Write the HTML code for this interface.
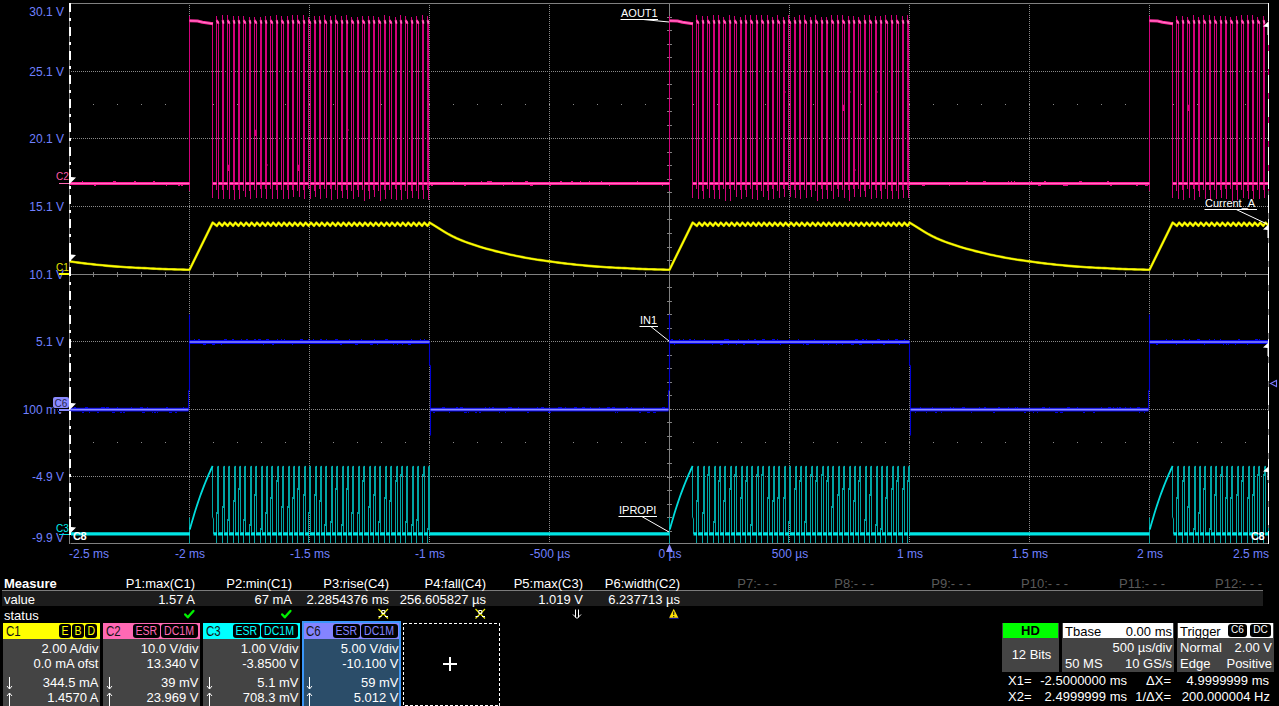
<!DOCTYPE html><html><head><meta charset="utf-8"><title>Oscilloscope</title><style>
html,body{margin:0;padding:0;background:#000;}
body{width:1279px;height:706px;overflow:hidden;position:relative;font-family:"Liberation Sans",Arial,sans-serif;color:#fff;}
.dot{stroke:#8a8a8a;stroke-width:1;stroke-dasharray:1 1;}
.ax{stroke:#808080;stroke-width:1;}
.gl{font-family:"Liberation Sans",Arial,sans-serif;font-size:11px;fill:#fff;}
.yl{position:absolute;right:1215px;font-size:12px;line-height:14px;color:#7080ff;white-space:nowrap;}
.tl{position:absolute;top:547px;font-size:12px;line-height:14px;color:#7080ff;white-space:nowrap;width:80px;text-align:center;}
.cm{position:absolute;font-size:10px;line-height:10px;white-space:nowrap;}
.t13{font-size:13px;line-height:15px;white-space:nowrap;position:absolute;}
.mh{position:absolute;top:576px;width:96px;text-align:right;font-size:13px;line-height:15px;white-space:nowrap;}
.mv{position:absolute;top:592px;width:96px;text-align:right;font-size:13px;line-height:15px;white-space:nowrap;}
.off{color:#5a5a5a;}
.cb{position:absolute;top:623px;width:97px;height:83px;background:#444;}
.cb .hd{position:absolute;left:0;top:0;width:97px;height:16px;}
.cb .nm{position:absolute;left:3px;top:0;font-size:14px;line-height:17px;color:#141414;transform:scaleX(.82);transform-origin:0 0;}
.bd{position:absolute;top:1px;height:14px;background:#000;border-radius:3px;font-size:12px;line-height:14px;text-align:center;}
.cb .r{position:absolute;right:1.5px;font-size:13px;line-height:15px;white-space:nowrap;color:#fff;}
.cb .a{position:absolute;left:3px;font-size:13px;line-height:15px;color:#fff;}
</style></head><body><svg width="1279" height="560" viewBox="0 0 1279 560" style="position:absolute;left:0;top:0"><defs><clipPath id="gc"><rect x="69.5" y="3.5" width="1199.5" height="540.5"/></clipPath></defs><g shape-rendering="crispEdges"><line class="dot" x1="189.5" y1="4.5" x2="189.5" y2="543.5"/><line class="dot" x1="309.5" y1="4.5" x2="309.5" y2="543.5"/><line class="dot" x1="429.5" y1="4.5" x2="429.5" y2="543.5"/><line class="dot" x1="549.5" y1="4.5" x2="549.5" y2="543.5"/><line class="dot" x1="789.5" y1="4.5" x2="789.5" y2="543.5"/><line class="dot" x1="909.5" y1="4.5" x2="909.5" y2="543.5"/><line class="dot" x1="1029.5" y1="4.5" x2="1029.5" y2="543.5"/><line class="dot" x1="1149.5" y1="4.5" x2="1149.5" y2="543.5"/><line class="dot" x1="71" y1="71.5" x2="1268.5" y2="71.5"/><line class="dot" x1="71" y1="138.5" x2="1268.5" y2="138.5"/><line class="dot" x1="71" y1="206.5" x2="1268.5" y2="206.5"/><line class="dot" x1="71" y1="341.5" x2="1268.5" y2="341.5"/><line class="dot" x1="71" y1="409.5" x2="1268.5" y2="409.5"/><line class="dot" x1="71" y1="476.5" x2="1268.5" y2="476.5"/><g fill="#8a8a8a"><rect x="93" y="104" width="1" height="1"/><rect x="117" y="104" width="1" height="1"/><rect x="141" y="104" width="1" height="1"/><rect x="165" y="104" width="1" height="1"/><rect x="189" y="104" width="1" height="1"/><rect x="213" y="104" width="1" height="1"/><rect x="237" y="104" width="1" height="1"/><rect x="261" y="104" width="1" height="1"/><rect x="285" y="104" width="1" height="1"/><rect x="309" y="104" width="1" height="1"/><rect x="333" y="104" width="1" height="1"/><rect x="357" y="104" width="1" height="1"/><rect x="381" y="104" width="1" height="1"/><rect x="405" y="104" width="1" height="1"/><rect x="429" y="104" width="1" height="1"/><rect x="453" y="104" width="1" height="1"/><rect x="477" y="104" width="1" height="1"/><rect x="501" y="104" width="1" height="1"/><rect x="525" y="104" width="1" height="1"/><rect x="549" y="104" width="1" height="1"/><rect x="573" y="104" width="1" height="1"/><rect x="597" y="104" width="1" height="1"/><rect x="621" y="104" width="1" height="1"/><rect x="645" y="104" width="1" height="1"/><rect x="669" y="104" width="1" height="1"/><rect x="693" y="104" width="1" height="1"/><rect x="717" y="104" width="1" height="1"/><rect x="741" y="104" width="1" height="1"/><rect x="765" y="104" width="1" height="1"/><rect x="789" y="104" width="1" height="1"/><rect x="813" y="104" width="1" height="1"/><rect x="837" y="104" width="1" height="1"/><rect x="861" y="104" width="1" height="1"/><rect x="885" y="104" width="1" height="1"/><rect x="909" y="104" width="1" height="1"/><rect x="933" y="104" width="1" height="1"/><rect x="957" y="104" width="1" height="1"/><rect x="981" y="104" width="1" height="1"/><rect x="1005" y="104" width="1" height="1"/><rect x="1029" y="104" width="1" height="1"/><rect x="1053" y="104" width="1" height="1"/><rect x="1077" y="104" width="1" height="1"/><rect x="1101" y="104" width="1" height="1"/><rect x="1125" y="104" width="1" height="1"/><rect x="1149" y="104" width="1" height="1"/><rect x="1173" y="104" width="1" height="1"/><rect x="1197" y="104" width="1" height="1"/><rect x="1221" y="104" width="1" height="1"/><rect x="1245" y="104" width="1" height="1"/></g><g fill="#8a8a8a"><rect x="93" y="442" width="1" height="1"/><rect x="117" y="442" width="1" height="1"/><rect x="141" y="442" width="1" height="1"/><rect x="165" y="442" width="1" height="1"/><rect x="189" y="442" width="1" height="1"/><rect x="213" y="442" width="1" height="1"/><rect x="237" y="442" width="1" height="1"/><rect x="261" y="442" width="1" height="1"/><rect x="285" y="442" width="1" height="1"/><rect x="309" y="442" width="1" height="1"/><rect x="333" y="442" width="1" height="1"/><rect x="357" y="442" width="1" height="1"/><rect x="381" y="442" width="1" height="1"/><rect x="405" y="442" width="1" height="1"/><rect x="429" y="442" width="1" height="1"/><rect x="453" y="442" width="1" height="1"/><rect x="477" y="442" width="1" height="1"/><rect x="501" y="442" width="1" height="1"/><rect x="525" y="442" width="1" height="1"/><rect x="549" y="442" width="1" height="1"/><rect x="573" y="442" width="1" height="1"/><rect x="597" y="442" width="1" height="1"/><rect x="621" y="442" width="1" height="1"/><rect x="645" y="442" width="1" height="1"/><rect x="669" y="442" width="1" height="1"/><rect x="693" y="442" width="1" height="1"/><rect x="717" y="442" width="1" height="1"/><rect x="741" y="442" width="1" height="1"/><rect x="765" y="442" width="1" height="1"/><rect x="789" y="442" width="1" height="1"/><rect x="813" y="442" width="1" height="1"/><rect x="837" y="442" width="1" height="1"/><rect x="861" y="442" width="1" height="1"/><rect x="885" y="442" width="1" height="1"/><rect x="909" y="442" width="1" height="1"/><rect x="933" y="442" width="1" height="1"/><rect x="957" y="442" width="1" height="1"/><rect x="981" y="442" width="1" height="1"/><rect x="1005" y="442" width="1" height="1"/><rect x="1029" y="442" width="1" height="1"/><rect x="1053" y="442" width="1" height="1"/><rect x="1077" y="442" width="1" height="1"/><rect x="1101" y="442" width="1" height="1"/><rect x="1125" y="442" width="1" height="1"/><rect x="1149" y="442" width="1" height="1"/><rect x="1173" y="442" width="1" height="1"/><rect x="1197" y="442" width="1" height="1"/><rect x="1221" y="442" width="1" height="1"/><rect x="1245" y="442" width="1" height="1"/></g><line class="ax" x1="669.5" y1="3.5" x2="669.5" y2="543.5"/><line class="ax" x1="69.5" y1="274.5" x2="1268.5" y2="274.5"/><path class="ax" d="M93.5 272V277M117.5 272V277M141.5 272V277M165.5 272V277M189.5 272V277M213.5 272V277M237.5 272V277M261.5 272V277M285.5 272V277M309.5 272V277M333.5 272V277M357.5 272V277M381.5 272V277M405.5 272V277M429.5 272V277M453.5 272V277M477.5 272V277M501.5 272V277M525.5 272V277M549.5 272V277M573.5 272V277M597.5 272V277M621.5 272V277M645.5 272V277M669.5 272V277M693.5 272V277M717.5 272V277M741.5 272V277M765.5 272V277M789.5 272V277M813.5 272V277M837.5 272V277M861.5 272V277M885.5 272V277M909.5 272V277M933.5 272V277M957.5 272V277M981.5 272V277M1005.5 272V277M1029.5 272V277M1053.5 272V277M1077.5 272V277M1101.5 272V277M1125.5 272V277M1149.5 272V277M1173.5 272V277M1197.5 272V277M1221.5 272V277M1245.5 272V277M667 17.5H672M667 30.5H672M667 44.5H672M667 57.5H672M667 71.5H672M667 84.5H672M667 98.5H672M667 111.5H672M667 125.5H672M667 138.5H672M667 152.5H672M667 165.5H672M667 179.5H672M667 192.5H672M667 206.5H672M667 219.5H672M667 233.5H672M667 247.5H672M667 260.5H672M667 274.5H672M667 287.5H672M667 301.5H672M667 314.5H672M667 328.5H672M667 341.5H672M667 355.5H672M667 368.5H672M667 382.5H672M667 395.5H672M667 409.5H672M667 422.5H672M667 436.5H672M667 449.5H672M667 463.5H672M667 477.5H672M667 490.5H672M667 504.5H672M667 517.5H672M667 531.5H672"/><rect class="ax" fill="none" x="69.5" y="3.5" width="1199" height="540"/></g><g clip-path="url(#gc)" fill="none" stroke-linejoin="round"><path stroke="#d2007a" stroke-width="1" d="M-290.5 191L-290.5 16M-267.5 22L-267.5 198M-263.5 190L-263.5 16M-261.5 21L-261.5 198M-257.5 190L-257.5 15M-256.5 21L-256.5 197M-252.5 191L-252.5 15M-250.5 21L-250.5 197M-246.5 190L-246.5 15M-245.5 21L-245.5 199M-241.5 189L-241.5 15M-240.5 21L-240.5 198M-236.5 190L-236.5 15M-234.5 21L-234.5 199M-230.5 189L-230.5 17M-229.5 21L-229.5 199M-225.5 190L-225.5 17M-223.5 21L-223.5 199M-219.5 190L-219.5 17M-218.5 21L-218.5 197M-214.5 189L-214.5 17M-213.5 21L-213.5 199M-209.5 190L-209.5 15M-207.5 21L-207.5 197M-203.5 191L-203.5 15M-202.5 21L-202.5 198M-198.5 190L-198.5 15M-196.5 21L-196.5 197M-192.5 190L-192.5 16M-191.5 21L-191.5 199M-187.5 190L-187.5 17M-186.5 21L-186.5 200M-182.5 190L-182.5 15M-180.5 21L-180.5 197M-176.5 190L-176.5 15M-175.5 21L-175.5 198M-171.5 189L-171.5 17M-169.5 21L-169.5 200M-165.5 189L-165.5 16M-164.5 21L-164.5 200M-160.5 190L-160.5 16M-159.5 21L-159.5 199M-155.5 190L-155.5 15M-153.5 21L-153.5 197M-149.5 189L-149.5 16M-148.5 21L-148.5 200M-144.5 191L-144.5 16M-142.5 21L-142.5 197M-138.5 190L-138.5 15M-137.5 21L-137.5 197M-133.5 190L-133.5 16M-132.5 21L-132.5 200M-128.5 189L-128.5 15M-126.5 21L-126.5 198M-122.5 190L-122.5 15M-121.5 21L-121.5 197M-117.5 191L-117.5 17M-115.5 21L-115.5 200M-111.5 189L-111.5 16M-110.5 21L-110.5 197M-106.5 190L-106.5 16M-105.5 21L-105.5 199M-101.5 189L-101.5 16M-99.5 21L-99.5 201M-95.5 190L-95.5 15M-94.5 21L-94.5 201M-90.5 189L-90.5 16M-88.5 21L-88.5 200M-84.5 191L-84.5 16M-83.5 21L-83.5 199M-79.5 191L-79.5 16M-78.5 21L-78.5 199M-74.5 190L-74.5 17M-72.5 21L-72.5 198M-68.5 190L-68.5 15M-67.5 21L-67.5 200M-63.5 190L-63.5 15M-61.5 21L-61.5 198M-57.5 189L-57.5 16M-56.5 21L-56.5 199M-52.5 189L-52.5 15M-51.5 21L-51.5 198M-62.5 111L-62.5 105L-61 105M-208.5 136L-208.5 130L-207 130M-105.5 136L-105.5 130L-104 130M-62.5 111L-62.5 105L-61 105M-110.5 111L-110.5 105L-109 105M189.5 191L189.5 16M212.5 22L212.5 198M216.5 190L216.5 16M218.5 21L218.5 199M222.5 190L222.5 15M223.5 21L223.5 199M227.5 190L227.5 15M229.5 21L229.5 199M233.5 190L233.5 16M234.5 21L234.5 200M238.5 190L238.5 16M239.5 21L239.5 199M243.5 191L243.5 16M245.5 21L245.5 197M249.5 191L249.5 17M250.5 21L250.5 199M254.5 190L254.5 17M256.5 21L256.5 198M260.5 189L260.5 17M261.5 21L261.5 198M265.5 189L265.5 16M266.5 21L266.5 199M270.5 189L270.5 16M272.5 21L272.5 199M276.5 190L276.5 15M277.5 21L277.5 199M281.5 190L281.5 16M283.5 21L283.5 199M287.5 190L287.5 16M288.5 21L288.5 199M292.5 190L292.5 15M293.5 21L293.5 197M297.5 191L297.5 15M299.5 21L299.5 197M303.5 190L303.5 15M304.5 21L304.5 199M308.5 189L308.5 17M310.5 21L310.5 199M314.5 191L314.5 16M315.5 21L315.5 197M319.5 189L319.5 16M320.5 21L320.5 199M324.5 189L324.5 15M326.5 21L326.5 198M330.5 189L330.5 16M331.5 21L331.5 200M335.5 190L335.5 15M337.5 21L337.5 199M341.5 191L341.5 16M342.5 21L342.5 198M346.5 190L346.5 15M347.5 21L347.5 199M351.5 191L351.5 17M353.5 21L353.5 199M357.5 190L357.5 17M358.5 21L358.5 197M362.5 190L362.5 16M364.5 21L364.5 201M368.5 191L368.5 16M369.5 21L369.5 199M373.5 190L373.5 16M374.5 21L374.5 197M378.5 191L378.5 17M380.5 21L380.5 201M384.5 190L384.5 15M385.5 21L385.5 199M389.5 190L389.5 16M391.5 21L391.5 199M395.5 189L395.5 17M396.5 21L396.5 200M400.5 190L400.5 15M401.5 21L401.5 200M405.5 191L405.5 16M407.5 21L407.5 199M411.5 191L411.5 17M412.5 21L412.5 198M416.5 191L416.5 16M418.5 21L418.5 199M422.5 190L422.5 15M423.5 21L423.5 199M427.5 190L427.5 16M428.5 21L428.5 200M298.5 171L298.5 165L300 165M228.5 171L228.5 165L230 165M347.5 136L347.5 130L349 130M255.5 136L255.5 130L257 130M266.5 171L266.5 165L268 165M669.5 191L669.5 16M692.5 22L692.5 198M696.5 189L696.5 15M698.5 21L698.5 199M702.5 191L702.5 16M703.5 21L703.5 199M707.5 189L707.5 16M709.5 21L709.5 198M713.5 190L713.5 15M714.5 21L714.5 199M718.5 190L718.5 15M719.5 21L719.5 199M723.5 189L723.5 17M725.5 21L725.5 201M729.5 189L729.5 15M730.5 21L730.5 201M734.5 190L734.5 16M736.5 21L736.5 197M740.5 190L740.5 17M741.5 21L741.5 199M745.5 190L745.5 15M746.5 21L746.5 197M750.5 189L750.5 15M752.5 21L752.5 199M756.5 190L756.5 15M757.5 21L757.5 200M761.5 191L761.5 15M763.5 21L763.5 197M767.5 191L767.5 15M768.5 21L768.5 200M772.5 189L772.5 17M773.5 21L773.5 199M777.5 191L777.5 15M779.5 21L779.5 198M783.5 189L783.5 17M784.5 21L784.5 197M788.5 190L788.5 15M790.5 21L790.5 197M794.5 190L794.5 17M795.5 21L795.5 198M799.5 190L799.5 15M800.5 21L800.5 199M804.5 190L804.5 15M806.5 21L806.5 198M810.5 190L810.5 17M811.5 21L811.5 197M815.5 191L815.5 15M817.5 21L817.5 201M821.5 189L821.5 17M822.5 21L822.5 199M826.5 190L826.5 17M827.5 21L827.5 199M831.5 191L831.5 15M833.5 21L833.5 199M837.5 189L837.5 15M838.5 21L838.5 197M842.5 190L842.5 15M844.5 21L844.5 198M848.5 190L848.5 16M849.5 21L849.5 201M853.5 189L853.5 16M854.5 21L854.5 197M858.5 189L858.5 17M860.5 21L860.5 197M864.5 191L864.5 15M865.5 21L865.5 197M869.5 189L869.5 15M871.5 21L871.5 199M875.5 190L875.5 16M876.5 21L876.5 198M880.5 191L880.5 16M881.5 21L881.5 199M885.5 189L885.5 15M887.5 21L887.5 199M891.5 191L891.5 15M892.5 21L892.5 199M896.5 191L896.5 15M898.5 21L898.5 199M902.5 190L902.5 16M903.5 21L903.5 198M907.5 190L907.5 15M908.5 21L908.5 198M876.5 98L876.5 92L878 92M784.5 98L784.5 92L786 92M854.5 176L854.5 170L856 170M843.5 111L843.5 105L845 105M849.5 98L849.5 92L851 92M1149.5 191L1149.5 16M1172.5 22L1172.5 198M1176.5 191L1176.5 16M1178.5 21L1178.5 199M1182.5 190L1182.5 16M1183.5 21L1183.5 200M1187.5 189L1187.5 17M1189.5 21L1189.5 198M1193.5 189L1193.5 15M1194.5 21L1194.5 200M1198.5 191L1198.5 17M1199.5 21L1199.5 197M1203.5 190L1203.5 15M1205.5 21L1205.5 199M1209.5 190L1209.5 15M1210.5 21L1210.5 200M1214.5 190L1214.5 16M1216.5 21L1216.5 199M1220.5 190L1220.5 16M1221.5 21L1221.5 198M1225.5 189L1225.5 16M1226.5 21L1226.5 199M1230.5 189L1230.5 17M1232.5 21L1232.5 201M1236.5 190L1236.5 16M1237.5 21L1237.5 200M1241.5 190L1241.5 15M1243.5 21L1243.5 198M1247.5 191L1247.5 15M1248.5 21L1248.5 199M1252.5 191L1252.5 15M1253.5 21L1253.5 199M1257.5 190L1257.5 17M1259.5 21L1259.5 199M1263.5 190L1263.5 16M1264.5 21L1264.5 198M1268.5 191L1268.5 15M1270.5 21L1270.5 197M1274.5 191L1274.5 16M1275.5 21L1275.5 197M1279.5 190L1279.5 15M1280.5 21L1280.5 197M1284.5 190L1284.5 15M1286.5 21L1286.5 199M1290.5 190L1290.5 16M1291.5 21L1291.5 199M1295.5 191L1295.5 15M1297.5 21L1297.5 201M1301.5 190L1301.5 16M1302.5 21L1302.5 200M1306.5 190L1306.5 16M1307.5 21L1307.5 200M1311.5 190L1311.5 16M1313.5 21L1313.5 200M1317.5 190L1317.5 15M1318.5 21L1318.5 199M1322.5 190L1322.5 17M1324.5 21L1324.5 197M1328.5 190L1328.5 16M1329.5 21L1329.5 198M1333.5 189L1333.5 15M1334.5 21L1334.5 201M1338.5 189L1338.5 16M1340.5 21L1340.5 197M1344.5 190L1344.5 16M1345.5 21L1345.5 199M1349.5 190L1349.5 16M1351.5 21L1351.5 201M1355.5 189L1355.5 15M1356.5 21L1356.5 200M1360.5 190L1360.5 15M1361.5 21L1361.5 199M1365.5 191L1365.5 15M1367.5 21L1367.5 198M1371.5 190L1371.5 15M1372.5 21L1372.5 199M1376.5 191L1376.5 16M1378.5 21L1378.5 197M1382.5 191L1382.5 15M1383.5 21L1383.5 199M1387.5 190L1387.5 16M1388.5 21L1388.5 199M1280.5 171L1280.5 165L1282 165M1188.5 111L1188.5 105L1190 105M1312.5 111L1312.5 105L1314 105M1377.5 111L1377.5 105L1379 105M1269.5 56L1269.5 50L1271 50"/><path stroke="#ff1c98" stroke-width="3" d="M-530.5 183.5H-290.5M-267 183.5H-263.5M-261.5 183.5H-257.5M-256.5 183.5H-252.5M-250.5 183.5H-246.5M-245.5 183.5H-241.5M-240.5 183.5H-236.5M-234.5 183.5H-230.5M-229.5 183.5H-225.5M-223.5 183.5H-219.5M-218.5 183.5H-214.5M-213.5 183.5H-209.5M-207.5 183.5H-203.5M-202.5 183.5H-198.5M-196.5 183.5H-192.5M-191.5 183.5H-187.5M-186.5 183.5H-182.5M-180.5 183.5H-176.5M-175.5 183.5H-171.5M-169.5 183.5H-165.5M-164.5 183.5H-160.5M-159.5 183.5H-155.5M-153.5 183.5H-149.5M-148.5 183.5H-144.5M-142.5 183.5H-138.5M-137.5 183.5H-133.5M-132.5 183.5H-128.5M-126.5 183.5H-122.5M-121.5 183.5H-117.5M-115.5 183.5H-111.5M-110.5 183.5H-106.5M-105.5 183.5H-101.5M-99.5 183.5H-95.5M-94.5 183.5H-90.5M-88.5 183.5H-84.5M-83.5 183.5H-79.5M-78.5 183.5H-74.5M-72.5 183.5H-68.5M-67.5 183.5H-63.5M-61.5 183.5H-57.5M-56.5 183.5H-52.5M-51.5 183.5H-49.5M-50.5 183.5H189.5M213 183.5H216.5M218.5 183.5H222.5M223.5 183.5H227.5M229.5 183.5H233.5M234.5 183.5H238.5M239.5 183.5H243.5M245.5 183.5H249.5M250.5 183.5H254.5M256.5 183.5H260.5M261.5 183.5H265.5M266.5 183.5H270.5M272.5 183.5H276.5M277.5 183.5H281.5M283.5 183.5H287.5M288.5 183.5H292.5M293.5 183.5H297.5M299.5 183.5H303.5M304.5 183.5H308.5M310.5 183.5H314.5M315.5 183.5H319.5M320.5 183.5H324.5M326.5 183.5H330.5M331.5 183.5H335.5M337.5 183.5H341.5M342.5 183.5H346.5M347.5 183.5H351.5M353.5 183.5H357.5M358.5 183.5H362.5M364.5 183.5H368.5M369.5 183.5H373.5M374.5 183.5H378.5M380.5 183.5H384.5M385.5 183.5H389.5M391.5 183.5H395.5M396.5 183.5H400.5M401.5 183.5H405.5M407.5 183.5H411.5M412.5 183.5H416.5M418.5 183.5H422.5M423.5 183.5H427.5M428.5 183.5H430.5M429.5 183.5H669.5M693 183.5H696.5M698.5 183.5H702.5M703.5 183.5H707.5M709.5 183.5H713.5M714.5 183.5H718.5M719.5 183.5H723.5M725.5 183.5H729.5M730.5 183.5H734.5M736.5 183.5H740.5M741.5 183.5H745.5M746.5 183.5H750.5M752.5 183.5H756.5M757.5 183.5H761.5M763.5 183.5H767.5M768.5 183.5H772.5M773.5 183.5H777.5M779.5 183.5H783.5M784.5 183.5H788.5M790.5 183.5H794.5M795.5 183.5H799.5M800.5 183.5H804.5M806.5 183.5H810.5M811.5 183.5H815.5M817.5 183.5H821.5M822.5 183.5H826.5M827.5 183.5H831.5M833.5 183.5H837.5M838.5 183.5H842.5M844.5 183.5H848.5M849.5 183.5H853.5M854.5 183.5H858.5M860.5 183.5H864.5M865.5 183.5H869.5M871.5 183.5H875.5M876.5 183.5H880.5M881.5 183.5H885.5M887.5 183.5H891.5M892.5 183.5H896.5M898.5 183.5H902.5M903.5 183.5H907.5M908.5 183.5H910.5M909.5 183.5H1149.5M1173 183.5H1176.5M1178.5 183.5H1182.5M1183.5 183.5H1187.5M1189.5 183.5H1193.5M1194.5 183.5H1198.5M1199.5 183.5H1203.5M1205.5 183.5H1209.5M1210.5 183.5H1214.5M1216.5 183.5H1220.5M1221.5 183.5H1225.5M1226.5 183.5H1230.5M1232.5 183.5H1236.5M1237.5 183.5H1241.5M1243.5 183.5H1247.5M1248.5 183.5H1252.5M1253.5 183.5H1257.5M1259.5 183.5H1263.5M1264.5 183.5H1268.5M1270.5 183.5H1274.5M1275.5 183.5H1279.5M1280.5 183.5H1284.5M1286.5 183.5H1290.5M1291.5 183.5H1295.5M1297.5 183.5H1301.5M1302.5 183.5H1306.5M1307.5 183.5H1311.5M1313.5 183.5H1317.5M1318.5 183.5H1322.5M1324.5 183.5H1328.5M1329.5 183.5H1333.5M1334.5 183.5H1338.5M1340.5 183.5H1344.5M1345.5 183.5H1349.5M1351.5 183.5H1355.5M1356.5 183.5H1360.5M1361.5 183.5H1365.5M1367.5 183.5H1371.5M1372.5 183.5H1376.5M1378.5 183.5H1382.5M1383.5 183.5H1387.5M1388.5 183.5H1390.5"/><path stroke="#ff70c0" stroke-width="1" d="M-530.5 183.5H-290.5M-267 183.5H-263.5M-261.5 183.5H-257.5M-256.5 183.5H-252.5M-250.5 183.5H-246.5M-245.5 183.5H-241.5M-240.5 183.5H-236.5M-234.5 183.5H-230.5M-229.5 183.5H-225.5M-223.5 183.5H-219.5M-218.5 183.5H-214.5M-213.5 183.5H-209.5M-207.5 183.5H-203.5M-202.5 183.5H-198.5M-196.5 183.5H-192.5M-191.5 183.5H-187.5M-186.5 183.5H-182.5M-180.5 183.5H-176.5M-175.5 183.5H-171.5M-169.5 183.5H-165.5M-164.5 183.5H-160.5M-159.5 183.5H-155.5M-153.5 183.5H-149.5M-148.5 183.5H-144.5M-142.5 183.5H-138.5M-137.5 183.5H-133.5M-132.5 183.5H-128.5M-126.5 183.5H-122.5M-121.5 183.5H-117.5M-115.5 183.5H-111.5M-110.5 183.5H-106.5M-105.5 183.5H-101.5M-99.5 183.5H-95.5M-94.5 183.5H-90.5M-88.5 183.5H-84.5M-83.5 183.5H-79.5M-78.5 183.5H-74.5M-72.5 183.5H-68.5M-67.5 183.5H-63.5M-61.5 183.5H-57.5M-56.5 183.5H-52.5M-51.5 183.5H-49.5M-50.5 183.5H189.5M213 183.5H216.5M218.5 183.5H222.5M223.5 183.5H227.5M229.5 183.5H233.5M234.5 183.5H238.5M239.5 183.5H243.5M245.5 183.5H249.5M250.5 183.5H254.5M256.5 183.5H260.5M261.5 183.5H265.5M266.5 183.5H270.5M272.5 183.5H276.5M277.5 183.5H281.5M283.5 183.5H287.5M288.5 183.5H292.5M293.5 183.5H297.5M299.5 183.5H303.5M304.5 183.5H308.5M310.5 183.5H314.5M315.5 183.5H319.5M320.5 183.5H324.5M326.5 183.5H330.5M331.5 183.5H335.5M337.5 183.5H341.5M342.5 183.5H346.5M347.5 183.5H351.5M353.5 183.5H357.5M358.5 183.5H362.5M364.5 183.5H368.5M369.5 183.5H373.5M374.5 183.5H378.5M380.5 183.5H384.5M385.5 183.5H389.5M391.5 183.5H395.5M396.5 183.5H400.5M401.5 183.5H405.5M407.5 183.5H411.5M412.5 183.5H416.5M418.5 183.5H422.5M423.5 183.5H427.5M428.5 183.5H430.5M429.5 183.5H669.5M693 183.5H696.5M698.5 183.5H702.5M703.5 183.5H707.5M709.5 183.5H713.5M714.5 183.5H718.5M719.5 183.5H723.5M725.5 183.5H729.5M730.5 183.5H734.5M736.5 183.5H740.5M741.5 183.5H745.5M746.5 183.5H750.5M752.5 183.5H756.5M757.5 183.5H761.5M763.5 183.5H767.5M768.5 183.5H772.5M773.5 183.5H777.5M779.5 183.5H783.5M784.5 183.5H788.5M790.5 183.5H794.5M795.5 183.5H799.5M800.5 183.5H804.5M806.5 183.5H810.5M811.5 183.5H815.5M817.5 183.5H821.5M822.5 183.5H826.5M827.5 183.5H831.5M833.5 183.5H837.5M838.5 183.5H842.5M844.5 183.5H848.5M849.5 183.5H853.5M854.5 183.5H858.5M860.5 183.5H864.5M865.5 183.5H869.5M871.5 183.5H875.5M876.5 183.5H880.5M881.5 183.5H885.5M887.5 183.5H891.5M892.5 183.5H896.5M898.5 183.5H902.5M903.5 183.5H907.5M908.5 183.5H910.5M909.5 183.5H1149.5M1173 183.5H1176.5M1178.5 183.5H1182.5M1183.5 183.5H1187.5M1189.5 183.5H1193.5M1194.5 183.5H1198.5M1199.5 183.5H1203.5M1205.5 183.5H1209.5M1210.5 183.5H1214.5M1216.5 183.5H1220.5M1221.5 183.5H1225.5M1226.5 183.5H1230.5M1232.5 183.5H1236.5M1237.5 183.5H1241.5M1243.5 183.5H1247.5M1248.5 183.5H1252.5M1253.5 183.5H1257.5M1259.5 183.5H1263.5M1264.5 183.5H1268.5M1270.5 183.5H1274.5M1275.5 183.5H1279.5M1280.5 183.5H1284.5M1286.5 183.5H1290.5M1291.5 183.5H1295.5M1297.5 183.5H1301.5M1302.5 183.5H1306.5M1307.5 183.5H1311.5M1313.5 183.5H1317.5M1318.5 183.5H1322.5M1324.5 183.5H1328.5M1329.5 183.5H1333.5M1334.5 183.5H1338.5M1340.5 183.5H1344.5M1345.5 183.5H1349.5M1351.5 183.5H1355.5M1356.5 183.5H1360.5M1361.5 183.5H1365.5M1367.5 183.5H1371.5M1372.5 183.5H1376.5M1378.5 183.5H1382.5M1383.5 183.5H1387.5M1388.5 183.5H1390.5"/><path stroke="#ff35a4" stroke-width="2.2" d="M-263.3 20L-261.6 23.6M-257.3 20L-256.6 23.6M-252.3 20L-250.6 23.6M-246.3 20L-245.6 23.6M-241.3 20L-240.6 23.6M-236.3 20L-234.6 23.6M-230.3 20L-229.6 23.6M-225.3 20L-223.6 23.6M-219.3 20L-218.6 23.6M-214.3 20L-213.6 23.6M-209.3 20L-207.6 23.6M-203.3 20L-202.6 23.6M-198.3 20L-196.6 23.6M-192.3 20L-191.6 23.6M-187.3 20L-186.6 23.6M-182.3 20L-180.6 23.6M-176.3 20L-175.6 23.6M-171.3 20L-169.6 23.6M-165.3 20L-164.6 23.6M-160.3 20L-159.6 23.6M-155.3 20L-153.6 23.6M-149.3 20L-148.6 23.6M-144.3 20L-142.6 23.6M-138.3 20L-137.6 23.6M-133.3 20L-132.6 23.6M-128.3 20L-126.6 23.6M-122.3 20L-121.6 23.6M-117.3 20L-115.6 23.6M-111.3 20L-110.6 23.6M-106.3 20L-105.6 23.6M-101.3 20L-99.6 23.6M-95.3 20L-94.6 23.6M-90.3 20L-88.6 23.6M-84.3 20L-83.6 23.6M-79.3 20L-78.6 23.6M-74.3 20L-72.6 23.6M-68.3 20L-67.6 23.6M-63.3 20L-61.6 23.6M-57.3 20L-56.6 23.6M-52.3 20L-51.6 23.6M216.7 20L218.4 23.6M222.7 20L223.4 23.6M227.7 20L229.4 23.6M233.7 20L234.4 23.6M238.7 20L239.4 23.6M243.7 20L245.4 23.6M249.7 20L250.4 23.6M254.7 20L256.4 23.6M260.7 20L261.4 23.6M265.7 20L266.4 23.6M270.7 20L272.4 23.6M276.7 20L277.4 23.6M281.7 20L283.4 23.6M287.7 20L288.4 23.6M292.7 20L293.4 23.6M297.7 20L299.4 23.6M303.7 20L304.4 23.6M308.7 20L310.4 23.6M314.7 20L315.4 23.6M319.7 20L320.4 23.6M324.7 20L326.4 23.6M330.7 20L331.4 23.6M335.7 20L337.4 23.6M341.7 20L342.4 23.6M346.7 20L347.4 23.6M351.7 20L353.4 23.6M357.7 20L358.4 23.6M362.7 20L364.4 23.6M368.7 20L369.4 23.6M373.7 20L374.4 23.6M378.7 20L380.4 23.6M384.7 20L385.4 23.6M389.7 20L391.4 23.6M395.7 20L396.4 23.6M400.7 20L401.4 23.6M405.7 20L407.4 23.6M411.7 20L412.4 23.6M416.7 20L418.4 23.6M422.7 20L423.4 23.6M427.7 20L428.4 23.6M696.7 20L698.4 23.6M702.7 20L703.4 23.6M707.7 20L709.4 23.6M713.7 20L714.4 23.6M718.7 20L719.4 23.6M723.7 20L725.4 23.6M729.7 20L730.4 23.6M734.7 20L736.4 23.6M740.7 20L741.4 23.6M745.7 20L746.4 23.6M750.7 20L752.4 23.6M756.7 20L757.4 23.6M761.7 20L763.4 23.6M767.7 20L768.4 23.6M772.7 20L773.4 23.6M777.7 20L779.4 23.6M783.7 20L784.4 23.6M788.7 20L790.4 23.6M794.7 20L795.4 23.6M799.7 20L800.4 23.6M804.7 20L806.4 23.6M810.7 20L811.4 23.6M815.7 20L817.4 23.6M821.7 20L822.4 23.6M826.7 20L827.4 23.6M831.7 20L833.4 23.6M837.7 20L838.4 23.6M842.7 20L844.4 23.6M848.7 20L849.4 23.6M853.7 20L854.4 23.6M858.7 20L860.4 23.6M864.7 20L865.4 23.6M869.7 20L871.4 23.6M875.7 20L876.4 23.6M880.7 20L881.4 23.6M885.7 20L887.4 23.6M891.7 20L892.4 23.6M896.7 20L898.4 23.6M902.7 20L903.4 23.6M907.7 20L908.4 23.6M1176.7 20L1178.4 23.6M1182.7 20L1183.4 23.6M1187.7 20L1189.4 23.6M1193.7 20L1194.4 23.6M1198.7 20L1199.4 23.6M1203.7 20L1205.4 23.6M1209.7 20L1210.4 23.6M1214.7 20L1216.4 23.6M1220.7 20L1221.4 23.6M1225.7 20L1226.4 23.6M1230.7 20L1232.4 23.6M1236.7 20L1237.4 23.6M1241.7 20L1243.4 23.6M1247.7 20L1248.4 23.6M1252.7 20L1253.4 23.6M1257.7 20L1259.4 23.6M1263.7 20L1264.4 23.6M1268.7 20L1270.4 23.6M1274.7 20L1275.4 23.6M1279.7 20L1280.4 23.6M1284.7 20L1286.4 23.6M1290.7 20L1291.4 23.6M1295.7 20L1297.4 23.6M1301.7 20L1302.4 23.6M1306.7 20L1307.4 23.6M1311.7 20L1313.4 23.6M1317.7 20L1318.4 23.6M1322.7 20L1324.4 23.6M1328.7 20L1329.4 23.6M1333.7 20L1334.4 23.6M1338.7 20L1340.4 23.6M1344.7 20L1345.4 23.6M1349.7 20L1351.4 23.6M1355.7 20L1356.4 23.6M1360.7 20L1361.4 23.6M1365.7 20L1367.4 23.6M1371.7 20L1372.4 23.6M1376.7 20L1378.4 23.6M1382.7 20L1383.4 23.6M1387.7 20L1388.4 23.6"/><path stroke="#ff8acd" stroke-width="1" stroke-linecap="round" d="M-263 21.5L-261.6 23.1M-257 21.5L-256.6 23.1M-252 21.5L-250.6 23.1M-246 21.5L-245.6 23.1M-241 21.5L-240.6 23.1M-236 21.5L-234.6 23.1M-230 21.5L-229.6 23.1M-225 21.5L-223.6 23.1M-219 21.5L-218.6 23.1M-214 21.5L-213.6 23.1M-209 21.5L-207.6 23.1M-203 21.5L-202.6 23.1M-198 21.5L-196.6 23.1M-192 21.5L-191.6 23.1M-187 21.5L-186.6 23.1M-182 21.5L-180.6 23.1M-176 21.5L-175.6 23.1M-171 21.5L-169.6 23.1M-165 21.5L-164.6 23.1M-160 21.5L-159.6 23.1M-155 21.5L-153.6 23.1M-149 21.5L-148.6 23.1M-144 21.5L-142.6 23.1M-138 21.5L-137.6 23.1M-133 21.5L-132.6 23.1M-128 21.5L-126.6 23.1M-122 21.5L-121.6 23.1M-117 21.5L-115.6 23.1M-111 21.5L-110.6 23.1M-106 21.5L-105.6 23.1M-101 21.5L-99.6 23.1M-95 21.5L-94.6 23.1M-90 21.5L-88.6 23.1M-84 21.5L-83.6 23.1M-79 21.5L-78.6 23.1M-74 21.5L-72.6 23.1M-68 21.5L-67.6 23.1M-63 21.5L-61.6 23.1M-57 21.5L-56.6 23.1M-52 21.5L-51.6 23.1M217 21.5L218.4 23.1M223 21.5L223.4 23.1M228 21.5L229.4 23.1M234 21.5L234.4 23.1M239 21.5L239.4 23.1M244 21.5L245.4 23.1M250 21.5L250.4 23.1M255 21.5L256.4 23.1M261 21.5L261.4 23.1M266 21.5L266.4 23.1M271 21.5L272.4 23.1M277 21.5L277.4 23.1M282 21.5L283.4 23.1M288 21.5L288.4 23.1M293 21.5L293.4 23.1M298 21.5L299.4 23.1M304 21.5L304.4 23.1M309 21.5L310.4 23.1M315 21.5L315.4 23.1M320 21.5L320.4 23.1M325 21.5L326.4 23.1M331 21.5L331.4 23.1M336 21.5L337.4 23.1M342 21.5L342.4 23.1M347 21.5L347.4 23.1M352 21.5L353.4 23.1M358 21.5L358.4 23.1M363 21.5L364.4 23.1M369 21.5L369.4 23.1M374 21.5L374.4 23.1M379 21.5L380.4 23.1M385 21.5L385.4 23.1M390 21.5L391.4 23.1M396 21.5L396.4 23.1M401 21.5L401.4 23.1M406 21.5L407.4 23.1M412 21.5L412.4 23.1M417 21.5L418.4 23.1M423 21.5L423.4 23.1M428 21.5L428.4 23.1M697 21.5L698.4 23.1M703 21.5L703.4 23.1M708 21.5L709.4 23.1M714 21.5L714.4 23.1M719 21.5L719.4 23.1M724 21.5L725.4 23.1M730 21.5L730.4 23.1M735 21.5L736.4 23.1M741 21.5L741.4 23.1M746 21.5L746.4 23.1M751 21.5L752.4 23.1M757 21.5L757.4 23.1M762 21.5L763.4 23.1M768 21.5L768.4 23.1M773 21.5L773.4 23.1M778 21.5L779.4 23.1M784 21.5L784.4 23.1M789 21.5L790.4 23.1M795 21.5L795.4 23.1M800 21.5L800.4 23.1M805 21.5L806.4 23.1M811 21.5L811.4 23.1M816 21.5L817.4 23.1M822 21.5L822.4 23.1M827 21.5L827.4 23.1M832 21.5L833.4 23.1M838 21.5L838.4 23.1M843 21.5L844.4 23.1M849 21.5L849.4 23.1M854 21.5L854.4 23.1M859 21.5L860.4 23.1M865 21.5L865.4 23.1M870 21.5L871.4 23.1M876 21.5L876.4 23.1M881 21.5L881.4 23.1M886 21.5L887.4 23.1M892 21.5L892.4 23.1M897 21.5L898.4 23.1M903 21.5L903.4 23.1M908 21.5L908.4 23.1M1177 21.5L1178.4 23.1M1183 21.5L1183.4 23.1M1188 21.5L1189.4 23.1M1194 21.5L1194.4 23.1M1199 21.5L1199.4 23.1M1204 21.5L1205.4 23.1M1210 21.5L1210.4 23.1M1215 21.5L1216.4 23.1M1221 21.5L1221.4 23.1M1226 21.5L1226.4 23.1M1231 21.5L1232.4 23.1M1237 21.5L1237.4 23.1M1242 21.5L1243.4 23.1M1248 21.5L1248.4 23.1M1253 21.5L1253.4 23.1M1258 21.5L1259.4 23.1M1264 21.5L1264.4 23.1M1269 21.5L1270.4 23.1M1275 21.5L1275.4 23.1M1280 21.5L1280.4 23.1M1285 21.5L1286.4 23.1M1291 21.5L1291.4 23.1M1296 21.5L1297.4 23.1M1302 21.5L1302.4 23.1M1307 21.5L1307.4 23.1M1312 21.5L1313.4 23.1M1318 21.5L1318.4 23.1M1323 21.5L1324.4 23.1M1329 21.5L1329.4 23.1M1334 21.5L1334.4 23.1M1339 21.5L1340.4 23.1M1345 21.5L1345.4 23.1M1350 21.5L1351.4 23.1M1356 21.5L1356.4 23.1M1361 21.5L1361.4 23.1M1366 21.5L1367.4 23.1M1372 21.5L1372.4 23.1M1377 21.5L1378.4 23.1M1383 21.5L1383.4 23.1M1388 21.5L1388.4 23.1"/><path stroke="#ff2da0" stroke-width="3" d="M-290.5 20.8L-282.5 21L-277.5 22.2L-267 23.8M189.5 20.8L197.5 21L202.5 22.2L213 23.8M669.5 20.8L677.5 21L682.5 22.2L693 23.8M1149.5 20.8L1157.5 21L1162.5 22.2L1173 23.8"/><path stroke="#ff80c8" stroke-width="1" d="M-290.5 20.8L-282.5 21L-277.5 22.2L-267 23.8M189.5 20.8L197.5 21L202.5 22.2L213 23.8M669.5 20.8L677.5 21L682.5 22.2L693 23.8M1149.5 20.8L1157.5 21L1162.5 22.2L1173 23.8"/><path stroke="#a0a000" stroke-width="2.6" d="M69.5 261.4L72.5 261.81L75.5 262.22L78.5 262.61L81.5 262.99L84.5 263.36L87.5 263.72L90.5 264.07L93.5 264.4L96.5 264.72L99.5 265.02L102.5 265.32L105.5 265.6L108.5 265.87L111.5 266.13L114.5 266.37L117.5 266.6L120.5 266.82L123.5 267.01L126.5 267.2L129.5 267.37L132.5 267.53L135.5 267.69L138.5 267.84L141.5 268L144.5 268.15L147.5 268.31L150.5 268.45L153.5 268.59L156.5 268.73L159.5 268.86L162.5 268.98L165.5 269.1L168.5 269.21L171.5 269.31L174.5 269.4L177.5 269.49L180.5 269.57L183.5 269.65L186.5 269.72L189.5 269.8L212.7 222.6L216.9 225.9L216.9 225.9L219.1 222.6L222.3 225.9L224.5 222.6L227.7 225.9L229.9 222.6L233.1 225.9L235.3 222.6L238.5 225.9L240.7 222.6L243.9 225.9L246.1 222.6L249.3 225.9L251.5 222.6L254.7 225.9L256.9 222.6L260.1 225.9L262.3 222.6L265.5 225.9L267.7 222.6L270.9 225.9L273.1 222.6L276.3 225.9L278.5 222.6L281.7 225.9L283.9 222.6L287.1 225.9L289.3 222.6L292.5 225.9L294.7 222.6L297.9 225.9L300.1 222.6L303.3 225.9L305.5 222.6L308.7 225.9L310.9 222.6L314.1 225.9L316.3 222.6L319.5 225.9L321.7 222.6L324.9 225.9L327.1 222.6L330.3 225.9L332.5 222.6L335.7 225.9L337.9 222.6L341.1 225.9L343.3 222.6L346.5 225.9L348.7 222.6L351.9 225.9L354.1 222.6L357.3 225.9L359.5 222.6L362.7 225.9L364.9 222.6L368.1 225.9L370.3 222.6L373.5 225.9L375.7 222.6L378.9 225.9L381.1 222.6L384.3 225.9L386.5 222.6L389.7 225.9L391.9 222.6L395.1 225.9L397.3 222.6L400.5 225.9L402.7 222.6L405.9 225.9L408.1 222.6L411.3 225.9L413.5 222.6L416.7 225.9L418.9 222.6L422.1 225.9L424.3 222.6L427.5 225.9L429.7 222.6L429.5 223L429.5 222.6L432.5 224.41L435.5 226.27L438.5 228.14L441.5 230.01L444.5 231.84L447.5 233.6L450.5 235.26L453.5 236.8L456.5 238.21L459.5 239.51L462.5 240.73L465.5 241.88L468.5 242.96L471.5 244L474.5 245.01L477.5 246L480.5 246.96L483.5 247.87L486.5 248.73L489.5 249.56L492.5 250.35L495.5 251.12L498.5 251.86L501.5 252.6L504.5 253.32L507.5 254.01L510.5 254.68L513.5 255.33L516.5 255.96L519.5 256.56L522.5 257.14L525.5 257.7L528.5 258.23L531.5 258.74L534.5 259.22L537.5 259.68L540.5 260.13L543.5 260.56L546.5 260.98L549.5 261.4L552.5 261.81L555.5 262.22L558.5 262.61L561.5 262.99L564.5 263.36L567.5 263.72L570.5 264.07L573.5 264.4L576.5 264.72L579.5 265.02L582.5 265.32L585.5 265.6L588.5 265.87L591.5 266.13L594.5 266.37L597.5 266.6L600.5 266.82L603.5 267.01L606.5 267.2L609.5 267.37L612.5 267.53L615.5 267.69L618.5 267.84L621.5 268L624.5 268.15L627.5 268.31L630.5 268.45L633.5 268.59L636.5 268.73L639.5 268.86L642.5 268.98L645.5 269.1L648.5 269.21L651.5 269.31L654.5 269.4L657.5 269.49L660.5 269.57L663.5 269.65L666.5 269.72L669.5 269.8L692.7 222.6L696.9 225.9L696.9 225.9L699.1 222.6L702.3 225.9L704.5 222.6L707.7 225.9L709.9 222.6L713.1 225.9L715.3 222.6L718.5 225.9L720.7 222.6L723.9 225.9L726.1 222.6L729.3 225.9L731.5 222.6L734.7 225.9L736.9 222.6L740.1 225.9L742.3 222.6L745.5 225.9L747.7 222.6L750.9 225.9L753.1 222.6L756.3 225.9L758.5 222.6L761.7 225.9L763.9 222.6L767.1 225.9L769.3 222.6L772.5 225.9L774.7 222.6L777.9 225.9L780.1 222.6L783.3 225.9L785.5 222.6L788.7 225.9L790.9 222.6L794.1 225.9L796.3 222.6L799.5 225.9L801.7 222.6L804.9 225.9L807.1 222.6L810.3 225.9L812.5 222.6L815.7 225.9L817.9 222.6L821.1 225.9L823.3 222.6L826.5 225.9L828.7 222.6L831.9 225.9L834.1 222.6L837.3 225.9L839.5 222.6L842.7 225.9L844.9 222.6L848.1 225.9L850.3 222.6L853.5 225.9L855.7 222.6L858.9 225.9L861.1 222.6L864.3 225.9L866.5 222.6L869.7 225.9L871.9 222.6L875.1 225.9L877.3 222.6L880.5 225.9L882.7 222.6L885.9 225.9L888.1 222.6L891.3 225.9L893.5 222.6L896.7 225.9L898.9 222.6L902.1 225.9L904.3 222.6L907.5 225.9L909.7 222.6L909.5 223L909.5 222.6L912.5 224.41L915.5 226.27L918.5 228.14L921.5 230.01L924.5 231.84L927.5 233.6L930.5 235.26L933.5 236.8L936.5 238.21L939.5 239.51L942.5 240.73L945.5 241.88L948.5 242.96L951.5 244L954.5 245.01L957.5 246L960.5 246.96L963.5 247.87L966.5 248.73L969.5 249.56L972.5 250.35L975.5 251.12L978.5 251.86L981.5 252.6L984.5 253.32L987.5 254.01L990.5 254.68L993.5 255.33L996.5 255.96L999.5 256.56L1002.5 257.14L1005.5 257.7L1008.5 258.23L1011.5 258.74L1014.5 259.22L1017.5 259.68L1020.5 260.13L1023.5 260.56L1026.5 260.98L1029.5 261.4L1032.5 261.81L1035.5 262.22L1038.5 262.61L1041.5 262.99L1044.5 263.36L1047.5 263.72L1050.5 264.07L1053.5 264.4L1056.5 264.72L1059.5 265.02L1062.5 265.32L1065.5 265.6L1068.5 265.87L1071.5 266.13L1074.5 266.37L1077.5 266.6L1080.5 266.82L1083.5 267.01L1086.5 267.2L1089.5 267.37L1092.5 267.53L1095.5 267.69L1098.5 267.84L1101.5 268L1104.5 268.15L1107.5 268.31L1110.5 268.45L1113.5 268.59L1116.5 268.73L1119.5 268.86L1122.5 268.98L1125.5 269.1L1128.5 269.21L1131.5 269.31L1134.5 269.4L1137.5 269.49L1140.5 269.57L1143.5 269.65L1146.5 269.72L1149.5 269.8L1172.7 222.6L1176.9 225.9L1176.9 225.9L1179.1 222.6L1182.3 225.9L1184.5 222.6L1187.7 225.9L1189.9 222.6L1193.1 225.9L1195.3 222.6L1198.5 225.9L1200.7 222.6L1203.9 225.9L1206.1 222.6L1209.3 225.9L1211.5 222.6L1214.7 225.9L1216.9 222.6L1220.1 225.9L1222.3 222.6L1225.5 225.9L1227.7 222.6L1230.9 225.9L1233.1 222.6L1236.3 225.9L1238.5 222.6L1241.7 225.9L1243.9 222.6L1247.1 225.9L1249.3 222.6L1252.5 225.9L1254.7 222.6L1257.9 225.9L1260.1 222.6L1263.3 225.9L1265.5 222.6L1268.7 225.9L1270.9 222.6L1274.1 225.9L1276.3 222.6L1279.5 225.9L1281.7 222.6L1284.9 225.9L1287.1 222.6L1290.3 225.9L1292.5 222.6L1295.7 225.9L1297.9 222.6L1301.1 225.9L1303.3 222.6L1306.5 225.9L1308.7 222.6L1311.9 225.9L1314.1 222.6L1317.3 225.9L1319.5 222.6L1322.7 225.9L1324.9 222.6L1328.1 225.9L1330.3 222.6L1333.5 225.9L1335.7 222.6L1338.9 225.9L1341.1 222.6L1344.3 225.9L1346.5 222.6L1349.7 225.9L1351.9 222.6L1355.1 225.9L1357.3 222.6L1360.5 225.9L1362.7 222.6L1365.9 225.9L1368.1 222.6L1371.3 225.9L1373.5 222.6L1376.7 225.9L1378.9 222.6L1382.1 225.9L1384.3 222.6L1387.5 225.9L1389.7 222.6L1389.5 223"/><path stroke="#ffff00" stroke-width="1.6" d="M69.5 261.4L72.5 261.81L75.5 262.22L78.5 262.61L81.5 262.99L84.5 263.36L87.5 263.72L90.5 264.07L93.5 264.4L96.5 264.72L99.5 265.02L102.5 265.32L105.5 265.6L108.5 265.87L111.5 266.13L114.5 266.37L117.5 266.6L120.5 266.82L123.5 267.01L126.5 267.2L129.5 267.37L132.5 267.53L135.5 267.69L138.5 267.84L141.5 268L144.5 268.15L147.5 268.31L150.5 268.45L153.5 268.59L156.5 268.73L159.5 268.86L162.5 268.98L165.5 269.1L168.5 269.21L171.5 269.31L174.5 269.4L177.5 269.49L180.5 269.57L183.5 269.65L186.5 269.72L189.5 269.8L212.7 222.6L216.9 225.9L216.9 225.9L219.1 222.6L222.3 225.9L224.5 222.6L227.7 225.9L229.9 222.6L233.1 225.9L235.3 222.6L238.5 225.9L240.7 222.6L243.9 225.9L246.1 222.6L249.3 225.9L251.5 222.6L254.7 225.9L256.9 222.6L260.1 225.9L262.3 222.6L265.5 225.9L267.7 222.6L270.9 225.9L273.1 222.6L276.3 225.9L278.5 222.6L281.7 225.9L283.9 222.6L287.1 225.9L289.3 222.6L292.5 225.9L294.7 222.6L297.9 225.9L300.1 222.6L303.3 225.9L305.5 222.6L308.7 225.9L310.9 222.6L314.1 225.9L316.3 222.6L319.5 225.9L321.7 222.6L324.9 225.9L327.1 222.6L330.3 225.9L332.5 222.6L335.7 225.9L337.9 222.6L341.1 225.9L343.3 222.6L346.5 225.9L348.7 222.6L351.9 225.9L354.1 222.6L357.3 225.9L359.5 222.6L362.7 225.9L364.9 222.6L368.1 225.9L370.3 222.6L373.5 225.9L375.7 222.6L378.9 225.9L381.1 222.6L384.3 225.9L386.5 222.6L389.7 225.9L391.9 222.6L395.1 225.9L397.3 222.6L400.5 225.9L402.7 222.6L405.9 225.9L408.1 222.6L411.3 225.9L413.5 222.6L416.7 225.9L418.9 222.6L422.1 225.9L424.3 222.6L427.5 225.9L429.7 222.6L429.5 223L429.5 222.6L432.5 224.41L435.5 226.27L438.5 228.14L441.5 230.01L444.5 231.84L447.5 233.6L450.5 235.26L453.5 236.8L456.5 238.21L459.5 239.51L462.5 240.73L465.5 241.88L468.5 242.96L471.5 244L474.5 245.01L477.5 246L480.5 246.96L483.5 247.87L486.5 248.73L489.5 249.56L492.5 250.35L495.5 251.12L498.5 251.86L501.5 252.6L504.5 253.32L507.5 254.01L510.5 254.68L513.5 255.33L516.5 255.96L519.5 256.56L522.5 257.14L525.5 257.7L528.5 258.23L531.5 258.74L534.5 259.22L537.5 259.68L540.5 260.13L543.5 260.56L546.5 260.98L549.5 261.4L552.5 261.81L555.5 262.22L558.5 262.61L561.5 262.99L564.5 263.36L567.5 263.72L570.5 264.07L573.5 264.4L576.5 264.72L579.5 265.02L582.5 265.32L585.5 265.6L588.5 265.87L591.5 266.13L594.5 266.37L597.5 266.6L600.5 266.82L603.5 267.01L606.5 267.2L609.5 267.37L612.5 267.53L615.5 267.69L618.5 267.84L621.5 268L624.5 268.15L627.5 268.31L630.5 268.45L633.5 268.59L636.5 268.73L639.5 268.86L642.5 268.98L645.5 269.1L648.5 269.21L651.5 269.31L654.5 269.4L657.5 269.49L660.5 269.57L663.5 269.65L666.5 269.72L669.5 269.8L692.7 222.6L696.9 225.9L696.9 225.9L699.1 222.6L702.3 225.9L704.5 222.6L707.7 225.9L709.9 222.6L713.1 225.9L715.3 222.6L718.5 225.9L720.7 222.6L723.9 225.9L726.1 222.6L729.3 225.9L731.5 222.6L734.7 225.9L736.9 222.6L740.1 225.9L742.3 222.6L745.5 225.9L747.7 222.6L750.9 225.9L753.1 222.6L756.3 225.9L758.5 222.6L761.7 225.9L763.9 222.6L767.1 225.9L769.3 222.6L772.5 225.9L774.7 222.6L777.9 225.9L780.1 222.6L783.3 225.9L785.5 222.6L788.7 225.9L790.9 222.6L794.1 225.9L796.3 222.6L799.5 225.9L801.7 222.6L804.9 225.9L807.1 222.6L810.3 225.9L812.5 222.6L815.7 225.9L817.9 222.6L821.1 225.9L823.3 222.6L826.5 225.9L828.7 222.6L831.9 225.9L834.1 222.6L837.3 225.9L839.5 222.6L842.7 225.9L844.9 222.6L848.1 225.9L850.3 222.6L853.5 225.9L855.7 222.6L858.9 225.9L861.1 222.6L864.3 225.9L866.5 222.6L869.7 225.9L871.9 222.6L875.1 225.9L877.3 222.6L880.5 225.9L882.7 222.6L885.9 225.9L888.1 222.6L891.3 225.9L893.5 222.6L896.7 225.9L898.9 222.6L902.1 225.9L904.3 222.6L907.5 225.9L909.7 222.6L909.5 223L909.5 222.6L912.5 224.41L915.5 226.27L918.5 228.14L921.5 230.01L924.5 231.84L927.5 233.6L930.5 235.26L933.5 236.8L936.5 238.21L939.5 239.51L942.5 240.73L945.5 241.88L948.5 242.96L951.5 244L954.5 245.01L957.5 246L960.5 246.96L963.5 247.87L966.5 248.73L969.5 249.56L972.5 250.35L975.5 251.12L978.5 251.86L981.5 252.6L984.5 253.32L987.5 254.01L990.5 254.68L993.5 255.33L996.5 255.96L999.5 256.56L1002.5 257.14L1005.5 257.7L1008.5 258.23L1011.5 258.74L1014.5 259.22L1017.5 259.68L1020.5 260.13L1023.5 260.56L1026.5 260.98L1029.5 261.4L1032.5 261.81L1035.5 262.22L1038.5 262.61L1041.5 262.99L1044.5 263.36L1047.5 263.72L1050.5 264.07L1053.5 264.4L1056.5 264.72L1059.5 265.02L1062.5 265.32L1065.5 265.6L1068.5 265.87L1071.5 266.13L1074.5 266.37L1077.5 266.6L1080.5 266.82L1083.5 267.01L1086.5 267.2L1089.5 267.37L1092.5 267.53L1095.5 267.69L1098.5 267.84L1101.5 268L1104.5 268.15L1107.5 268.31L1110.5 268.45L1113.5 268.59L1116.5 268.73L1119.5 268.86L1122.5 268.98L1125.5 269.1L1128.5 269.21L1131.5 269.31L1134.5 269.4L1137.5 269.49L1140.5 269.57L1143.5 269.65L1146.5 269.72L1149.5 269.8L1172.7 222.6L1176.9 225.9L1176.9 225.9L1179.1 222.6L1182.3 225.9L1184.5 222.6L1187.7 225.9L1189.9 222.6L1193.1 225.9L1195.3 222.6L1198.5 225.9L1200.7 222.6L1203.9 225.9L1206.1 222.6L1209.3 225.9L1211.5 222.6L1214.7 225.9L1216.9 222.6L1220.1 225.9L1222.3 222.6L1225.5 225.9L1227.7 222.6L1230.9 225.9L1233.1 222.6L1236.3 225.9L1238.5 222.6L1241.7 225.9L1243.9 222.6L1247.1 225.9L1249.3 222.6L1252.5 225.9L1254.7 222.6L1257.9 225.9L1260.1 222.6L1263.3 225.9L1265.5 222.6L1268.7 225.9L1270.9 222.6L1274.1 225.9L1276.3 222.6L1279.5 225.9L1281.7 222.6L1284.9 225.9L1287.1 222.6L1290.3 225.9L1292.5 222.6L1295.7 225.9L1297.9 222.6L1301.1 225.9L1303.3 222.6L1306.5 225.9L1308.7 222.6L1311.9 225.9L1314.1 222.6L1317.3 225.9L1319.5 222.6L1322.7 225.9L1324.9 222.6L1328.1 225.9L1330.3 222.6L1333.5 225.9L1335.7 222.6L1338.9 225.9L1341.1 222.6L1344.3 225.9L1346.5 222.6L1349.7 225.9L1351.9 222.6L1355.1 225.9L1357.3 222.6L1360.5 225.9L1362.7 222.6L1365.9 225.9L1368.1 222.6L1371.3 225.9L1373.5 222.6L1376.7 225.9L1378.9 222.6L1382.1 225.9L1384.3 222.6L1387.5 225.9L1389.7 222.6L1389.5 223"/><path stroke="#0000d0" stroke-width="1.1" d="M188.5 409.7L188.5 391L189.5 390L189.5 314.5M429.5 342L429.5 365L430.5 366L430.5 435.5M668.5 409.7L668.5 391L669.5 390L669.5 314.5M909.5 342L909.5 365L910.5 366L910.5 435.5M1148.5 409.7L1148.5 391L1149.5 390L1149.5 314.5M1389.5 342L1389.5 365L1390.5 366L1390.5 435.5"/><path stroke="#0000e8" stroke-width="3.8" stroke-linejoin="miter" d="M69.5 409.7H188.5M189.5 342H429.5M430.5 409.7H668.5M669.5 342H909.5M910.5 409.7H1148.5M1149.5 342H1389.5M1390.5 409.7H1628.5"/><path stroke="#8e8eff" stroke-width="1.7" d="M69.5 409.7H188.5M189.5 342H429.5M430.5 409.7H668.5M669.5 342H909.5M910.5 409.7H1148.5M1149.5 342H1389.5M1390.5 409.7H1628.5"/><g fill="#0000e0" stroke="none" shape-rendering="crispEdges"><rect x="74" y="407" width="2" height="1"/><rect x="82" y="412" width="2" height="1"/><rect x="85" y="407" width="3" height="1"/><rect x="89" y="412" width="1" height="1"/><rect x="97" y="412" width="2" height="1"/><rect x="101" y="407" width="3" height="1"/><rect x="104" y="407" width="1" height="1"/><rect x="106" y="407" width="3" height="1"/><rect x="112" y="412" width="3" height="1"/><rect x="117" y="407" width="1" height="1"/><rect x="120" y="412" width="2" height="1"/><rect x="123" y="412" width="2" height="1"/><rect x="131" y="407" width="1" height="1"/><rect x="140" y="407" width="3" height="1"/><rect x="142" y="412" width="3" height="1"/><rect x="147" y="407" width="1" height="1"/><rect x="152" y="412" width="1" height="1"/><rect x="154" y="412" width="2" height="1"/><rect x="157" y="412" width="1" height="1"/><rect x="166" y="407" width="2" height="1"/><rect x="169" y="412" width="3" height="1"/><rect x="175" y="412" width="2" height="1"/><rect x="183" y="407" width="1" height="1"/></g><g fill="#0000e0" stroke="none" shape-rendering="crispEdges"><rect x="194" y="339" width="1" height="1"/><rect x="198" y="339" width="2" height="1"/><rect x="203" y="344" width="3" height="1"/><rect x="212" y="344" width="3" height="1"/><rect x="221" y="344" width="1" height="1"/><rect x="224" y="339" width="3" height="1"/><rect x="232" y="339" width="2" height="1"/><rect x="241" y="339" width="1" height="1"/><rect x="246" y="339" width="2" height="1"/><rect x="254" y="339" width="2" height="1"/><rect x="258" y="339" width="3" height="1"/><rect x="263" y="344" width="1" height="1"/><rect x="266" y="339" width="3" height="1"/><rect x="272" y="344" width="2" height="1"/><rect x="277" y="339" width="1" height="1"/><rect x="281" y="339" width="1" height="1"/><rect x="284" y="339" width="1" height="1"/><rect x="292" y="344" width="1" height="1"/><rect x="300" y="339" width="3" height="1"/><rect x="308" y="339" width="1" height="1"/><rect x="313" y="339" width="1" height="1"/><rect x="320" y="339" width="2" height="1"/><rect x="326" y="339" width="1" height="1"/><rect x="335" y="339" width="3" height="1"/><rect x="340" y="344" width="2" height="1"/><rect x="349" y="339" width="1" height="1"/><rect x="355" y="344" width="3" height="1"/><rect x="361" y="339" width="1" height="1"/><rect x="370" y="344" width="3" height="1"/><rect x="374" y="339" width="1" height="1"/><rect x="377" y="344" width="1" height="1"/><rect x="385" y="339" width="3" height="1"/><rect x="393" y="344" width="1" height="1"/><rect x="397" y="344" width="1" height="1"/><rect x="402" y="344" width="1" height="1"/><rect x="408" y="344" width="3" height="1"/><rect x="411" y="339" width="1" height="1"/><rect x="420" y="339" width="1" height="1"/><rect x="424" y="339" width="1" height="1"/></g><g fill="#0000e0" stroke="none" shape-rendering="crispEdges"><rect x="433" y="412" width="2" height="1"/><rect x="442" y="407" width="3" height="1"/><rect x="449" y="412" width="1" height="1"/><rect x="456" y="407" width="2" height="1"/><rect x="460" y="407" width="3" height="1"/><rect x="464" y="412" width="3" height="1"/><rect x="468" y="412" width="1" height="1"/><rect x="475" y="412" width="2" height="1"/><rect x="479" y="412" width="2" height="1"/><rect x="485" y="407" width="1" height="1"/><rect x="489" y="407" width="1" height="1"/><rect x="492" y="407" width="2" height="1"/><rect x="499" y="412" width="1" height="1"/><rect x="505" y="412" width="1" height="1"/><rect x="508" y="407" width="3" height="1"/><rect x="511" y="407" width="1" height="1"/><rect x="518" y="407" width="1" height="1"/><rect x="527" y="412" width="2" height="1"/><rect x="537" y="407" width="1" height="1"/><rect x="541" y="407" width="3" height="1"/><rect x="548" y="412" width="3" height="1"/><rect x="558" y="407" width="3" height="1"/><rect x="560" y="407" width="2" height="1"/><rect x="565" y="407" width="1" height="1"/><rect x="574" y="407" width="3" height="1"/><rect x="582" y="407" width="3" height="1"/><rect x="590" y="407" width="1" height="1"/><rect x="599" y="407" width="1" height="1"/><rect x="607" y="407" width="3" height="1"/><rect x="612" y="407" width="3" height="1"/><rect x="615" y="412" width="1" height="1"/><rect x="617" y="412" width="1" height="1"/><rect x="626" y="407" width="2" height="1"/><rect x="631" y="407" width="1" height="1"/><rect x="639" y="412" width="2" height="1"/><rect x="643" y="407" width="1" height="1"/><rect x="647" y="412" width="3" height="1"/><rect x="653" y="412" width="3" height="1"/><rect x="662" y="407" width="3" height="1"/></g><g fill="#e0108a" stroke="none" shape-rendering="crispEdges"><rect x="431" y="185" width="2" height="1"/><rect x="453" y="181" width="1" height="1"/><rect x="464" y="185" width="2" height="1"/><rect x="481" y="181" width="1" height="1"/><rect x="487" y="181" width="3" height="1"/><rect x="490" y="181" width="2" height="1"/><rect x="503" y="185" width="1" height="1"/><rect x="512" y="181" width="1" height="1"/><rect x="525" y="181" width="3" height="1"/><rect x="530" y="185" width="3" height="1"/><rect x="550" y="185" width="1" height="1"/><rect x="560" y="181" width="2" height="1"/><rect x="571" y="181" width="2" height="1"/><rect x="580" y="181" width="1" height="1"/><rect x="589" y="181" width="1" height="1"/><rect x="601" y="181" width="1" height="1"/><rect x="609" y="185" width="1" height="1"/><rect x="637" y="181" width="1" height="1"/><rect x="662" y="185" width="1" height="1"/></g><g fill="#0000e0" stroke="none" shape-rendering="crispEdges"><rect x="671" y="339" width="2" height="1"/><rect x="674" y="344" width="1" height="1"/><rect x="679" y="339" width="1" height="1"/><rect x="683" y="339" width="1" height="1"/><rect x="689" y="339" width="2" height="1"/><rect x="694" y="339" width="1" height="1"/><rect x="704" y="339" width="1" height="1"/><rect x="712" y="344" width="1" height="1"/><rect x="720" y="344" width="3" height="1"/><rect x="724" y="339" width="2" height="1"/><rect x="726" y="339" width="3" height="1"/><rect x="728" y="344" width="1" height="1"/><rect x="736" y="344" width="1" height="1"/><rect x="738" y="339" width="1" height="1"/><rect x="743" y="344" width="2" height="1"/><rect x="748" y="339" width="1" height="1"/><rect x="754" y="339" width="2" height="1"/><rect x="757" y="344" width="2" height="1"/><rect x="762" y="339" width="3" height="1"/><rect x="764" y="339" width="1" height="1"/><rect x="772" y="339" width="3" height="1"/><rect x="777" y="339" width="1" height="1"/><rect x="780" y="344" width="1" height="1"/><rect x="789" y="339" width="1" height="1"/><rect x="798" y="339" width="1" height="1"/><rect x="803" y="344" width="1" height="1"/><rect x="806" y="344" width="3" height="1"/><rect x="814" y="339" width="1" height="1"/><rect x="823" y="344" width="1" height="1"/><rect x="828" y="344" width="1" height="1"/><rect x="836" y="344" width="1" height="1"/><rect x="842" y="344" width="1" height="1"/><rect x="851" y="344" width="3" height="1"/><rect x="855" y="339" width="3" height="1"/><rect x="859" y="344" width="3" height="1"/><rect x="862" y="339" width="2" height="1"/><rect x="866" y="339" width="1" height="1"/><rect x="872" y="344" width="1" height="1"/><rect x="877" y="339" width="3" height="1"/><rect x="883" y="344" width="2" height="1"/><rect x="888" y="339" width="1" height="1"/><rect x="895" y="339" width="3" height="1"/><rect x="899" y="344" width="1" height="1"/><rect x="904" y="339" width="1" height="1"/></g><g fill="#0000e0" stroke="none" shape-rendering="crispEdges"><rect x="915" y="412" width="1" height="1"/><rect x="920" y="407" width="1" height="1"/><rect x="926" y="412" width="1" height="1"/><rect x="932" y="407" width="1" height="1"/><rect x="935" y="412" width="2" height="1"/><rect x="941" y="412" width="1" height="1"/><rect x="950" y="407" width="1" height="1"/><rect x="953" y="407" width="1" height="1"/><rect x="962" y="407" width="3" height="1"/><rect x="971" y="412" width="1" height="1"/><rect x="979" y="407" width="1" height="1"/><rect x="984" y="407" width="2" height="1"/><rect x="993" y="412" width="2" height="1"/><rect x="998" y="407" width="2" height="1"/><rect x="1008" y="407" width="1" height="1"/><rect x="1015" y="407" width="1" height="1"/><rect x="1017" y="407" width="1" height="1"/><rect x="1024" y="412" width="2" height="1"/><rect x="1033" y="412" width="1" height="1"/><rect x="1037" y="412" width="1" height="1"/><rect x="1042" y="407" width="3" height="1"/><rect x="1049" y="407" width="1" height="1"/><rect x="1055" y="412" width="3" height="1"/><rect x="1060" y="412" width="3" height="1"/><rect x="1067" y="407" width="2" height="1"/><rect x="1069" y="407" width="1" height="1"/><rect x="1077" y="407" width="1" height="1"/><rect x="1083" y="412" width="2" height="1"/><rect x="1093" y="412" width="2" height="1"/><rect x="1101" y="407" width="1" height="1"/><rect x="1108" y="407" width="3" height="1"/><rect x="1113" y="407" width="1" height="1"/><rect x="1117" y="407" width="1" height="1"/><rect x="1119" y="407" width="2" height="1"/><rect x="1125" y="407" width="1" height="1"/><rect x="1130" y="407" width="1" height="1"/><rect x="1137" y="407" width="3" height="1"/><rect x="1139" y="412" width="1" height="1"/><rect x="1144" y="412" width="1" height="1"/></g><g fill="#e0108a" stroke="none" shape-rendering="crispEdges"><rect x="922" y="185" width="3" height="1"/><rect x="949" y="185" width="1" height="1"/><rect x="966" y="181" width="2" height="1"/><rect x="983" y="181" width="3" height="1"/><rect x="1008" y="181" width="1" height="1"/><rect x="1011" y="181" width="1" height="1"/><rect x="1014" y="181" width="1" height="1"/><rect x="1031" y="181" width="1" height="1"/><rect x="1038" y="185" width="3" height="1"/><rect x="1044" y="181" width="2" height="1"/><rect x="1063" y="185" width="3" height="1"/><rect x="1065" y="185" width="3" height="1"/><rect x="1079" y="181" width="3" height="1"/><rect x="1107" y="181" width="2" height="1"/><rect x="1110" y="185" width="2" height="1"/><rect x="1136" y="185" width="2" height="1"/><rect x="1145" y="185" width="3" height="1"/></g><g fill="#0000e0" stroke="none" shape-rendering="crispEdges"><rect x="1156" y="344" width="2" height="1"/><rect x="1166" y="339" width="1" height="1"/><rect x="1172" y="339" width="1" height="1"/><rect x="1176" y="344" width="1" height="1"/><rect x="1183" y="339" width="2" height="1"/><rect x="1189" y="339" width="1" height="1"/><rect x="1197" y="339" width="3" height="1"/><rect x="1204" y="344" width="1" height="1"/><rect x="1209" y="339" width="1" height="1"/><rect x="1214" y="339" width="1" height="1"/><rect x="1220" y="339" width="1" height="1"/><rect x="1223" y="344" width="1" height="1"/><rect x="1226" y="344" width="1" height="1"/><rect x="1228" y="344" width="1" height="1"/><rect x="1235" y="344" width="1" height="1"/><rect x="1238" y="339" width="2" height="1"/><rect x="1247" y="344" width="1" height="1"/><rect x="1255" y="339" width="3" height="1"/><rect x="1259" y="339" width="1" height="1"/><rect x="1269" y="344" width="1" height="1"/><rect x="1276" y="339" width="2" height="1"/><rect x="1279" y="339" width="1" height="1"/><rect x="1283" y="339" width="2" height="1"/><rect x="1287" y="339" width="2" height="1"/><rect x="1296" y="344" width="2" height="1"/><rect x="1302" y="344" width="3" height="1"/><rect x="1309" y="344" width="1" height="1"/><rect x="1312" y="339" width="1" height="1"/><rect x="1319" y="344" width="1" height="1"/><rect x="1328" y="339" width="2" height="1"/><rect x="1330" y="339" width="1" height="1"/><rect x="1338" y="339" width="1" height="1"/><rect x="1344" y="344" width="3" height="1"/><rect x="1352" y="339" width="3" height="1"/><rect x="1362" y="339" width="2" height="1"/><rect x="1365" y="344" width="1" height="1"/><rect x="1369" y="339" width="1" height="1"/><rect x="1376" y="339" width="1" height="1"/></g><g fill="#0000e0" stroke="none" shape-rendering="crispEdges"><rect x="1394" y="412" width="1" height="1"/><rect x="1399" y="412" width="3" height="1"/><rect x="1408" y="407" width="1" height="1"/><rect x="1415" y="407" width="2" height="1"/><rect x="1419" y="407" width="1" height="1"/><rect x="1428" y="412" width="1" height="1"/><rect x="1431" y="407" width="1" height="1"/><rect x="1436" y="412" width="1" height="1"/><rect x="1441" y="407" width="2" height="1"/><rect x="1447" y="407" width="2" height="1"/><rect x="1450" y="412" width="3" height="1"/><rect x="1457" y="407" width="1" height="1"/><rect x="1465" y="412" width="1" height="1"/><rect x="1475" y="412" width="2" height="1"/><rect x="1480" y="407" width="1" height="1"/><rect x="1484" y="407" width="1" height="1"/><rect x="1491" y="407" width="1" height="1"/><rect x="1501" y="412" width="2" height="1"/><rect x="1506" y="407" width="1" height="1"/><rect x="1515" y="407" width="2" height="1"/><rect x="1521" y="407" width="1" height="1"/><rect x="1529" y="412" width="3" height="1"/><rect x="1535" y="407" width="2" height="1"/><rect x="1539" y="407" width="3" height="1"/><rect x="1543" y="412" width="3" height="1"/><rect x="1549" y="412" width="3" height="1"/><rect x="1557" y="412" width="1" height="1"/><rect x="1564" y="407" width="3" height="1"/><rect x="1568" y="412" width="1" height="1"/><rect x="1572" y="412" width="3" height="1"/><rect x="1579" y="412" width="2" height="1"/><rect x="1585" y="412" width="1" height="1"/><rect x="1590" y="412" width="1" height="1"/><rect x="1595" y="407" width="1" height="1"/><rect x="1600" y="407" width="1" height="1"/><rect x="1607" y="412" width="1" height="1"/><rect x="1616" y="407" width="1" height="1"/><rect x="1619" y="407" width="3" height="1"/></g><g fill="#e0108a" stroke="none" shape-rendering="crispEdges"><rect x="1398" y="181" width="2" height="1"/><rect x="1411" y="181" width="3" height="1"/><rect x="1431" y="181" width="3" height="1"/><rect x="1457" y="185" width="2" height="1"/><rect x="1465" y="181" width="3" height="1"/><rect x="1468" y="185" width="3" height="1"/><rect x="1486" y="181" width="2" height="1"/><rect x="1491" y="185" width="2" height="1"/><rect x="1517" y="185" width="1" height="1"/><rect x="1544" y="181" width="3" height="1"/><rect x="1550" y="185" width="1" height="1"/><rect x="1568" y="185" width="3" height="1"/><rect x="1589" y="181" width="1" height="1"/><rect x="1608" y="181" width="3" height="1"/><rect x="1617" y="185" width="1" height="1"/></g><g fill="#e0108a" stroke="none" shape-rendering="crispEdges"><rect x="82" y="181" width="1" height="1"/><rect x="94" y="185" width="2" height="1"/><rect x="113" y="181" width="3" height="1"/><rect x="134" y="181" width="2" height="1"/><rect x="153" y="181" width="2" height="1"/><rect x="166" y="185" width="1" height="1"/><rect x="178" y="185" width="2" height="1"/><rect x="181" y="185" width="2" height="1"/></g><path stroke="#00a4a4" stroke-width="1" d="M189.5 517.5L189.5 543.5M212.5 466L212.5 517L213.5 519L213.5 533.9M216.5 543L216.5 512M217.5 514L217.5 467.5M218.5 466L218.5 532M222.5 543L222.5 506M223.5 508L223.5 467.5M224.5 466L224.5 532M227.5 543L227.5 519M228.5 521L228.5 467.5M229.5 466L229.5 532M233.5 543L233.5 500M234.5 502L234.5 467.5M235.5 466L235.5 532M238.5 543L238.5 488M239.5 490L239.5 467.5M240.5 466L240.5 532M243.5 543L243.5 519M244.5 521L244.5 467.5M245.5 466L245.5 532M249.5 543L249.5 524M250.5 526L250.5 467.5M251.5 466L251.5 532M254.5 543L254.5 494M255.5 496L255.5 467.5M256.5 466L256.5 532M260.5 543L260.5 528M261.5 530L261.5 467.5M262.5 466L262.5 532M265.5 543L265.5 512M266.5 514L266.5 467.5M267.5 466L267.5 532M270.5 543L270.5 497M271.5 499L271.5 467.5M272.5 466L272.5 532M276.5 543L276.5 480M277.5 482L277.5 467.5M278.5 466L278.5 532M281.5 543L281.5 506M282.5 508L282.5 467.5M283.5 466L283.5 532M287.5 543L287.5 506M288.5 508L288.5 467.5M289.5 466L289.5 532M292.5 543L292.5 497M293.5 499L293.5 467.5M294.5 466L294.5 532M297.5 543L297.5 488M298.5 490L298.5 467.5M299.5 466L299.5 532M303.5 543L303.5 494M304.5 496L304.5 467.5M305.5 466L305.5 532M308.5 543L308.5 512M309.5 514L309.5 467.5M310.5 466L310.5 532M314.5 543L314.5 494M315.5 496L315.5 467.5M316.5 466L316.5 532M319.5 543L319.5 500M320.5 502L320.5 467.5M321.5 466L321.5 532M324.5 543L324.5 524M325.5 526L325.5 467.5M326.5 466L326.5 532M330.5 543L330.5 521M331.5 523L331.5 467.5M332.5 466L332.5 532M335.5 543L335.5 488M336.5 490L336.5 467.5M337.5 466L337.5 532M341.5 543L341.5 524M342.5 526L342.5 467.5M343.5 466L343.5 532M346.5 543L346.5 488M347.5 490L347.5 467.5M348.5 466L348.5 532M351.5 543L351.5 512M352.5 514L352.5 467.5M353.5 466L353.5 532M357.5 543L357.5 512M358.5 514L358.5 467.5M359.5 466L359.5 532M362.5 543L362.5 480M363.5 482L363.5 467.5M364.5 466L364.5 532M368.5 543L368.5 506M369.5 508L369.5 467.5M370.5 466L370.5 532M373.5 543L373.5 494M374.5 496L374.5 467.5M375.5 466L375.5 532M378.5 543L378.5 521M379.5 523L379.5 467.5M380.5 466L380.5 532M384.5 543L384.5 497M385.5 499L385.5 467.5M386.5 466L386.5 532M389.5 543L389.5 500M390.5 502L390.5 467.5M391.5 466L391.5 532M395.5 543L395.5 480M396.5 482L396.5 467.5M397.5 466L397.5 532M400.5 543L400.5 474M401.5 476L401.5 467.5M402.5 466L402.5 532M405.5 543L405.5 521M406.5 523L406.5 467.5M407.5 466L407.5 532M411.5 543L411.5 524M412.5 526L412.5 467.5M413.5 466L413.5 532M416.5 543L416.5 519M417.5 521L417.5 467.5M418.5 466L418.5 532M422.5 543L422.5 474M423.5 476L423.5 467.5M424.5 466L424.5 532M427.5 543L427.5 528M428.5 530L428.5 467.5M429.5 466L429.5 532M669.5 517.5L669.5 543.5M692.5 466L692.5 517L693.5 519L693.5 533.9M696.5 543L696.5 500M697.5 502L697.5 467.5M698.5 466L698.5 532M702.5 543L702.5 512M703.5 514L703.5 467.5M704.5 466L704.5 532M707.5 543L707.5 474M708.5 476L708.5 467.5M709.5 466L709.5 532M713.5 543L713.5 521M714.5 523L714.5 467.5M715.5 466L715.5 532M718.5 543L718.5 480M719.5 482L719.5 467.5M720.5 466L720.5 532M723.5 543L723.5 500M724.5 502L724.5 467.5M725.5 466L725.5 532M729.5 543L729.5 488M730.5 490L730.5 467.5M731.5 466L731.5 532M734.5 543L734.5 474M735.5 476L735.5 467.5M736.5 466L736.5 532M740.5 543L740.5 497M741.5 499L741.5 467.5M742.5 466L742.5 532M745.5 543L745.5 480M746.5 482L746.5 467.5M747.5 466L747.5 532M750.5 543L750.5 524M751.5 526L751.5 467.5M752.5 466L752.5 532M756.5 543L756.5 474M757.5 476L757.5 467.5M758.5 466L758.5 532M761.5 543L761.5 474M762.5 476L762.5 467.5M763.5 466L763.5 532M767.5 543L767.5 497M768.5 499L768.5 467.5M769.5 466L769.5 532M772.5 543L772.5 500M773.5 502L773.5 467.5M774.5 466L774.5 532M777.5 543L777.5 497M778.5 499L778.5 467.5M779.5 466L779.5 532M783.5 543L783.5 497M784.5 499L784.5 467.5M785.5 466L785.5 532M788.5 543L788.5 521M789.5 523L789.5 467.5M790.5 466L790.5 532M794.5 543L794.5 488M795.5 490L795.5 467.5M796.5 466L796.5 532M799.5 543L799.5 480M800.5 482L800.5 467.5M801.5 466L801.5 532M804.5 543L804.5 521M805.5 523L805.5 467.5M806.5 466L806.5 532M810.5 543L810.5 474M811.5 476L811.5 467.5M812.5 466L812.5 532M815.5 543L815.5 480M816.5 482L816.5 467.5M817.5 466L817.5 532M821.5 543L821.5 474M822.5 476L822.5 467.5M823.5 466L823.5 532M826.5 543L826.5 480M827.5 482L827.5 467.5M828.5 466L828.5 532M831.5 543L831.5 506M832.5 508L832.5 467.5M833.5 466L833.5 532M837.5 543L837.5 494M838.5 496L838.5 467.5M839.5 466L839.5 532M842.5 543L842.5 488M843.5 490L843.5 467.5M844.5 466L844.5 532M848.5 543L848.5 488M849.5 490L849.5 467.5M850.5 466L850.5 532M853.5 543L853.5 500M854.5 502L854.5 467.5M855.5 466L855.5 532M858.5 543L858.5 480M859.5 482L859.5 467.5M860.5 466L860.5 532M864.5 543L864.5 519M865.5 521L865.5 467.5M866.5 466L866.5 532M869.5 543L869.5 494M870.5 496L870.5 467.5M871.5 466L871.5 532M875.5 543L875.5 524M876.5 526L876.5 467.5M877.5 466L877.5 532M880.5 543L880.5 528M881.5 530L881.5 467.5M882.5 466L882.5 532M885.5 543L885.5 497M886.5 499L886.5 467.5M887.5 466L887.5 532M891.5 543L891.5 488M892.5 490L892.5 467.5M893.5 466L893.5 532M896.5 543L896.5 480M897.5 482L897.5 467.5M898.5 466L898.5 532M902.5 543L902.5 488M903.5 490L903.5 467.5M904.5 466L904.5 532M907.5 543L907.5 480M908.5 482L908.5 467.5M909.5 466L909.5 532M1149.5 517.5L1149.5 543.5M1172.5 466L1172.5 517L1173.5 519L1173.5 533.9M1176.5 543L1176.5 497M1177.5 499L1177.5 467.5M1178.5 466L1178.5 532M1182.5 543L1182.5 480M1183.5 482L1183.5 467.5M1184.5 466L1184.5 532M1187.5 543L1187.5 506M1188.5 508L1188.5 467.5M1189.5 466L1189.5 532M1193.5 543L1193.5 528M1194.5 530L1194.5 467.5M1195.5 466L1195.5 532M1198.5 543L1198.5 512M1199.5 514L1199.5 467.5M1200.5 466L1200.5 532M1203.5 543L1203.5 488M1204.5 490L1204.5 467.5M1205.5 466L1205.5 532M1209.5 543L1209.5 528M1210.5 530L1210.5 467.5M1211.5 466L1211.5 532M1214.5 543L1214.5 494M1215.5 496L1215.5 467.5M1216.5 466L1216.5 532M1220.5 543L1220.5 474M1221.5 476L1221.5 467.5M1222.5 466L1222.5 532M1225.5 543L1225.5 497M1226.5 499L1226.5 467.5M1227.5 466L1227.5 532M1230.5 543L1230.5 497M1231.5 499L1231.5 467.5M1232.5 466L1232.5 532M1236.5 543L1236.5 494M1237.5 496L1237.5 467.5M1238.5 466L1238.5 532M1241.5 543L1241.5 480M1242.5 482L1242.5 467.5M1243.5 466L1243.5 532M1247.5 543L1247.5 497M1248.5 499L1248.5 467.5M1249.5 466L1249.5 532M1252.5 543L1252.5 494M1253.5 496L1253.5 467.5M1254.5 466L1254.5 532M1257.5 543L1257.5 474M1258.5 476L1258.5 467.5M1259.5 466L1259.5 532M1263.5 543L1263.5 474M1264.5 476L1264.5 467.5M1265.5 466L1265.5 532M1268.5 543L1268.5 528M1269.5 530L1269.5 467.5M1270.5 466L1270.5 532M1274.5 543L1274.5 512M1275.5 514L1275.5 467.5M1276.5 466L1276.5 532M1279.5 543L1279.5 494M1280.5 496L1280.5 467.5M1281.5 466L1281.5 532M1284.5 543L1284.5 512M1285.5 514L1285.5 467.5M1286.5 466L1286.5 532M1290.5 543L1290.5 506M1291.5 508L1291.5 467.5M1292.5 466L1292.5 532M1295.5 543L1295.5 474M1296.5 476L1296.5 467.5M1297.5 466L1297.5 532M1301.5 543L1301.5 506M1302.5 508L1302.5 467.5M1303.5 466L1303.5 532M1306.5 543L1306.5 506M1307.5 508L1307.5 467.5M1308.5 466L1308.5 532M1311.5 543L1311.5 474M1312.5 476L1312.5 467.5M1313.5 466L1313.5 532M1317.5 543L1317.5 480M1318.5 482L1318.5 467.5M1319.5 466L1319.5 532M1322.5 543L1322.5 528M1323.5 530L1323.5 467.5M1324.5 466L1324.5 532M1328.5 543L1328.5 528M1329.5 530L1329.5 467.5M1330.5 466L1330.5 532M1333.5 543L1333.5 524M1334.5 526L1334.5 467.5M1335.5 466L1335.5 532M1338.5 543L1338.5 494M1339.5 496L1339.5 467.5M1340.5 466L1340.5 532M1344.5 543L1344.5 528M1345.5 530L1345.5 467.5M1346.5 466L1346.5 532M1349.5 543L1349.5 480M1350.5 482L1350.5 467.5M1351.5 466L1351.5 532M1355.5 543L1355.5 512M1356.5 514L1356.5 467.5M1357.5 466L1357.5 532M1360.5 543L1360.5 488M1361.5 490L1361.5 467.5M1362.5 466L1362.5 532M1365.5 543L1365.5 521M1366.5 523L1366.5 467.5M1367.5 466L1367.5 532M1371.5 543L1371.5 480M1372.5 482L1372.5 467.5M1373.5 466L1373.5 532M1376.5 543L1376.5 480M1377.5 482L1377.5 467.5M1378.5 466L1378.5 532M1382.5 543L1382.5 506M1383.5 508L1383.5 467.5M1384.5 466L1384.5 532M1387.5 543L1387.5 494M1388.5 496L1388.5 467.5M1389.5 466L1389.5 532"/><path stroke="#00b8b8" stroke-width="1.1" d="M217.5 468L218.1 466.3L218.5 467M223.5 468L224.1 466.3L224.5 467M228.5 468L229.1 466.3L229.5 467M234.5 468L235.1 466.3L235.5 467M239.5 468L240.1 466.3L240.5 467M244.5 468L245.1 466.3L245.5 467M250.5 468L251.1 466.3L251.5 467M255.5 468L256.1 466.3L256.5 467M261.5 468L262.1 466.3L262.5 467M266.5 468L267.1 466.3L267.5 467M271.5 468L272.1 466.3L272.5 467M277.5 468L278.1 466.3L278.5 467M282.5 468L283.1 466.3L283.5 467M288.5 468L289.1 466.3L289.5 467M293.5 468L294.1 466.3L294.5 467M298.5 468L299.1 466.3L299.5 467M304.5 468L305.1 466.3L305.5 467M309.5 468L310.1 466.3L310.5 467M315.5 468L316.1 466.3L316.5 467M320.5 468L321.1 466.3L321.5 467M325.5 468L326.1 466.3L326.5 467M331.5 468L332.1 466.3L332.5 467M336.5 468L337.1 466.3L337.5 467M342.5 468L343.1 466.3L343.5 467M347.5 468L348.1 466.3L348.5 467M352.5 468L353.1 466.3L353.5 467M358.5 468L359.1 466.3L359.5 467M363.5 468L364.1 466.3L364.5 467M369.5 468L370.1 466.3L370.5 467M374.5 468L375.1 466.3L375.5 467M379.5 468L380.1 466.3L380.5 467M385.5 468L386.1 466.3L386.5 467M390.5 468L391.1 466.3L391.5 467M396.5 468L397.1 466.3L397.5 467M401.5 468L402.1 466.3L402.5 467M406.5 468L407.1 466.3L407.5 467M412.5 468L413.1 466.3L413.5 467M417.5 468L418.1 466.3L418.5 467M423.5 468L424.1 466.3L424.5 467M428.5 468L429.1 466.3L429.5 467M697.5 468L698.1 466.3L698.5 467M703.5 468L704.1 466.3L704.5 467M708.5 468L709.1 466.3L709.5 467M714.5 468L715.1 466.3L715.5 467M719.5 468L720.1 466.3L720.5 467M724.5 468L725.1 466.3L725.5 467M730.5 468L731.1 466.3L731.5 467M735.5 468L736.1 466.3L736.5 467M741.5 468L742.1 466.3L742.5 467M746.5 468L747.1 466.3L747.5 467M751.5 468L752.1 466.3L752.5 467M757.5 468L758.1 466.3L758.5 467M762.5 468L763.1 466.3L763.5 467M768.5 468L769.1 466.3L769.5 467M773.5 468L774.1 466.3L774.5 467M778.5 468L779.1 466.3L779.5 467M784.5 468L785.1 466.3L785.5 467M789.5 468L790.1 466.3L790.5 467M795.5 468L796.1 466.3L796.5 467M800.5 468L801.1 466.3L801.5 467M805.5 468L806.1 466.3L806.5 467M811.5 468L812.1 466.3L812.5 467M816.5 468L817.1 466.3L817.5 467M822.5 468L823.1 466.3L823.5 467M827.5 468L828.1 466.3L828.5 467M832.5 468L833.1 466.3L833.5 467M838.5 468L839.1 466.3L839.5 467M843.5 468L844.1 466.3L844.5 467M849.5 468L850.1 466.3L850.5 467M854.5 468L855.1 466.3L855.5 467M859.5 468L860.1 466.3L860.5 467M865.5 468L866.1 466.3L866.5 467M870.5 468L871.1 466.3L871.5 467M876.5 468L877.1 466.3L877.5 467M881.5 468L882.1 466.3L882.5 467M886.5 468L887.1 466.3L887.5 467M892.5 468L893.1 466.3L893.5 467M897.5 468L898.1 466.3L898.5 467M903.5 468L904.1 466.3L904.5 467M908.5 468L909.1 466.3L909.5 467M1177.5 468L1178.1 466.3L1178.5 467M1183.5 468L1184.1 466.3L1184.5 467M1188.5 468L1189.1 466.3L1189.5 467M1194.5 468L1195.1 466.3L1195.5 467M1199.5 468L1200.1 466.3L1200.5 467M1204.5 468L1205.1 466.3L1205.5 467M1210.5 468L1211.1 466.3L1211.5 467M1215.5 468L1216.1 466.3L1216.5 467M1221.5 468L1222.1 466.3L1222.5 467M1226.5 468L1227.1 466.3L1227.5 467M1231.5 468L1232.1 466.3L1232.5 467M1237.5 468L1238.1 466.3L1238.5 467M1242.5 468L1243.1 466.3L1243.5 467M1248.5 468L1249.1 466.3L1249.5 467M1253.5 468L1254.1 466.3L1254.5 467M1258.5 468L1259.1 466.3L1259.5 467M1264.5 468L1265.1 466.3L1265.5 467M1269.5 468L1270.1 466.3L1270.5 467M1275.5 468L1276.1 466.3L1276.5 467M1280.5 468L1281.1 466.3L1281.5 467M1285.5 468L1286.1 466.3L1286.5 467M1291.5 468L1292.1 466.3L1292.5 467M1296.5 468L1297.1 466.3L1297.5 467M1302.5 468L1303.1 466.3L1303.5 467M1307.5 468L1308.1 466.3L1308.5 467M1312.5 468L1313.1 466.3L1313.5 467M1318.5 468L1319.1 466.3L1319.5 467M1323.5 468L1324.1 466.3L1324.5 467M1329.5 468L1330.1 466.3L1330.5 467M1334.5 468L1335.1 466.3L1335.5 467M1339.5 468L1340.1 466.3L1340.5 467M1345.5 468L1346.1 466.3L1346.5 467M1350.5 468L1351.1 466.3L1351.5 467M1356.5 468L1357.1 466.3L1357.5 467M1361.5 468L1362.1 466.3L1362.5 467M1366.5 468L1367.1 466.3L1367.5 467M1372.5 468L1373.1 466.3L1373.5 467M1377.5 468L1378.1 466.3L1378.5 467M1383.5 468L1384.1 466.3L1384.5 467M1388.5 468L1389.1 466.3L1389.5 467"/><path stroke="#00dcdc" stroke-width="1.8" d="M189.8 529.5L190.75 526.05L191.7 522.69L192.66 519.41L193.61 516.21L194.56 513.08L195.51 510.02L196.47 507.04L197.42 504.14L198.37 501.3L199.32 498.52L200.27 495.82L201.23 493.18L202.18 490.6L203.13 488.08L204.08 485.63L205.03 483.23L205.99 480.89L206.94 478.61L207.89 476.38L208.84 474.2L209.8 472.07L210.75 470L211.7 467.98L212.65 466M669.8 529.5L670.75 526.05L671.7 522.69L672.66 519.41L673.61 516.21L674.56 513.08L675.51 510.02L676.47 507.04L677.42 504.14L678.37 501.3L679.32 498.52L680.27 495.82L681.23 493.18L682.18 490.6L683.13 488.08L684.08 485.63L685.03 483.23L685.99 480.89L686.94 478.61L687.89 476.38L688.84 474.2L689.8 472.07L690.75 470L691.7 467.98L692.65 466M1149.8 529.5L1150.75 526.05L1151.7 522.69L1152.66 519.41L1153.61 516.21L1154.56 513.08L1155.51 510.02L1156.47 507.04L1157.42 504.14L1158.37 501.3L1159.32 498.52L1160.27 495.82L1161.23 493.18L1162.18 490.6L1163.13 488.08L1164.08 485.63L1165.03 483.23L1165.99 480.89L1166.94 478.61L1167.89 476.38L1168.84 474.2L1169.8 472.07L1170.75 470L1171.7 467.98L1172.65 466"/><path stroke="#00e6e6" stroke-width="3.2" d="M69.5 533.9H190M213.5 533.9H217M218 533.9H223M224 533.9H228M229 533.9H234M235 533.9H239M240 533.9H244M245 533.9H250M251 533.9H255M256 533.9H261M262 533.9H266M267 533.9H271M272 533.9H277M278 533.9H282M283 533.9H288M289 533.9H293M294 533.9H298M299 533.9H304M305 533.9H309M310 533.9H315M316 533.9H320M321 533.9H325M326 533.9H331M332 533.9H336M337 533.9H342M343 533.9H347M348 533.9H352M353 533.9H358M359 533.9H363M364 533.9H369M370 533.9H374M375 533.9H379M380 533.9H385M386 533.9H390M391 533.9H396M397 533.9H401M402 533.9H406M407 533.9H412M413 533.9H417M418 533.9H423M424 533.9H428M429 533.9H669.5M693.5 533.9H697M698 533.9H703M704 533.9H708M709 533.9H714M715 533.9H719M720 533.9H724M725 533.9H730M731 533.9H735M736 533.9H741M742 533.9H746M747 533.9H751M752 533.9H757M758 533.9H762M763 533.9H768M769 533.9H773M774 533.9H778M779 533.9H784M785 533.9H789M790 533.9H795M796 533.9H800M801 533.9H805M806 533.9H811M812 533.9H816M817 533.9H822M823 533.9H827M828 533.9H832M833 533.9H838M839 533.9H843M844 533.9H849M850 533.9H854M855 533.9H859M860 533.9H865M866 533.9H870M871 533.9H876M877 533.9H881M882 533.9H886M887 533.9H892M893 533.9H897M898 533.9H903M904 533.9H908M909 533.9H1149.5M1173.5 533.9H1177M1178 533.9H1183M1184 533.9H1188M1189 533.9H1194M1195 533.9H1199M1200 533.9H1204M1205 533.9H1210M1211 533.9H1215M1216 533.9H1221M1222 533.9H1226M1227 533.9H1231M1232 533.9H1237M1238 533.9H1242M1243 533.9H1248M1249 533.9H1253M1254 533.9H1258M1259 533.9H1264M1265 533.9H1269M1270 533.9H1275M1276 533.9H1280M1281 533.9H1285M1286 533.9H1291M1292 533.9H1296M1297 533.9H1302M1303 533.9H1307M1308 533.9H1312M1313 533.9H1318M1319 533.9H1323M1324 533.9H1329M1330 533.9H1334M1335 533.9H1339M1340 533.9H1345M1346 533.9H1350M1351 533.9H1356M1357 533.9H1361M1362 533.9H1366M1367 533.9H1372M1373 533.9H1377M1378 533.9H1383M1384 533.9H1388M1389 533.9H1629.5"/></g><line x1="70" y1="3" x2="70" y2="544" stroke="#fff" stroke-width="2" stroke-dasharray="9 6 3 6" shape-rendering="crispEdges"/><line x1="1268.5" y1="3" x2="1268.5" y2="544" stroke="#fff" stroke-width="1" stroke-dasharray="18 6" shape-rendering="crispEdges"/><path fill="#fff" d="M69 169 L71 169 L71 177 L76 177.5 L69 184.5 Z"/><path fill="#fff" d="M69 246.5 L71 246.5 L71 254.5 L76 255 L69 262 Z"/><path fill="#fff" d="M69 395 L71 395 L71 403 L76 403.5 L69 410.5 Z"/><path fill="#fff" d="M69 519 L71 519 L71 527 L76 527.5 L69 534.5 Z"/><rect x="69" y="535" width="2" height="8.5" fill="#000"/><rect x="69" y="535" width="1" height="9" fill="#808080"/><path fill="#fff" d="M1269 21 L1263 26.5 L1267.5 27 L1267.5 35 L1269 35 Z"/><path fill="#fff" d="M1269 224 L1263 229.5 L1267.5 230 L1267.5 238 L1269 238 Z"/><path fill="#fff" d="M1269 342 L1263 347.5 L1267.5 348 L1267.5 356 L1269 356 Z"/><path fill="#fff" d="M1269 466 L1263 471.5 L1267.5 472 L1267.5 480 L1269 480 Z"/><path fill="none" stroke="#7a7aff" stroke-width="1.1" d="M1270.5 383.5 L1276.5 380.5 L1276.5 386.5 Z"/><path fill="#8c8cff" d="M669.5 544 L666 552 L673 552 Z"/><text x="621" y="17" class="gl">AOUT1</text><path stroke="#fff" stroke-width="1" fill="none" d="M620.5 19.5H658 M643.2 19.5L669 22"/><text x="1205" y="207" class="gl">Current_A</text><path stroke="#fff" stroke-width="1" fill="none" d="M1204.5 209.5H1257 M1236.2 209.5L1267 224"/><text x="640" y="324" class="gl">IN1</text><path stroke="#fff" stroke-width="1" fill="none" d="M639.5 326.5H658 M650.8 326.5L669 341"/><text x="619" y="514" class="gl">IPROPI</text><path stroke="#fff" stroke-width="1" fill="none" d="M618.5 516.5H657 M641.8 516.5L669 532"/></svg><div class="yl" style="top:5px">30.1 V</div><div class="yl" style="top:65px">25.1 V</div><div class="yl" style="top:132px">20.1 V</div><div class="yl" style="top:200px">15.1 V</div><div class="yl" style="top:268px">10.1 V</div><div class="yl" style="top:335px">5.1 V</div><div class="yl" style="top:403px">100 mV</div><div class="yl" style="top:470px">-4.9 V</div><div class="yl" style="top:531px">-9.9 V</div><div class="tl" style="left:69px;text-align:left">-2.5 ms</div><div class="tl" style="left:150px">-2 ms</div><div class="tl" style="left:270px">-1.5 ms</div><div class="tl" style="left:390px">-1 ms</div><div class="tl" style="left:510px">-500 µs</div><div class="tl" style="left:630px">0 µs</div><div class="tl" style="left:750px">500 µs</div><div class="tl" style="left:870px">1 ms</div><div class="tl" style="left:990px">1.5 ms</div><div class="tl" style="left:1110px">2 ms</div><div class="tl" style="left:1189px;text-align:right">2.5 ms</div><div class="cm" style="left:56px;top:172px;color:#ff5aa8">C2</div><div style="position:absolute;left:59px;top:183px;width:10px;height:1px;background:#ff69b4"></div><div class="cm" style="left:56px;top:263px;color:#e6e600">C1</div><div style="position:absolute;left:59px;top:273px;width:10px;height:2px;background:#ffff00"></div><div style="position:absolute;left:59px;top:409px;width:10px;height:2px;background:#8c8cff;box-shadow:-1px 0 0 #000,0 1px 0 #000"></div><div class="cm" style="left:53px;top:397px;width:16px;height:11px;background:#8a8aff;color:#26264a;border-radius:2px;text-align:center;line-height:14px;box-shadow:-1px 0 0 #000,0 1px 0 #000,0 -1px 0 #000">C6</div><div class="cm" style="left:56px;top:524px;color:#00f0f0">C3</div><div style="position:absolute;left:59px;top:534px;width:10px;height:1px;background:#00e0e0"></div><div class="cm" style="left:73px;top:531px;color:#fff;font-size:11px;font-weight:bold;letter-spacing:-.5px">C8</div><div class="cm" style="left:1251px;top:531px;color:#fff;font-size:11px;font-weight:bold;letter-spacing:-.5px">C8</div><div style="position:absolute;left:2px;top:590px;width:1261px;height:1px;background:#7c7c7c"></div><div style="position:absolute;left:2px;top:591px;width:1261px;height:15px;background:#1d1d1d"></div><div class="t13" style="left:4px;top:576px;font-weight:bold">Measure</div><div class="t13" style="left:4px;top:592px">value</div><div class="t13" style="left:4px;top:608px">status</div><div class="mh" style="left:99px">P1:max(C1)</div><div class="mv" style="left:99px">1.57 A</div><div class="mh" style="left:196px">P2:min(C1)</div><div class="mv" style="left:196px">67 mA</div><div class="mh" style="left:293px">P3:rise(C4)</div><div class="mv" style="left:293px">2.2854376 ms</div><div class="mh" style="left:390px">P4:fall(C4)</div><div class="mv" style="left:390px">256.605827 µs</div><div class="mh" style="left:487px">P5:max(C3)</div><div class="mv" style="left:487px">1.019 V</div><div class="mh" style="left:584px">P6:width(C2)</div><div class="mv" style="left:584px">6.237713 µs</div><div class="mh off" style="left:681px">P7:- - -</div><div class="mh off" style="left:778px">P8:- - -</div><div class="mh off" style="left:875px">P9:- - -</div><div class="mh off" style="left:972px">P10:- - -</div><div class="mh off" style="left:1069px">P11:- - -</div><div class="mh off" style="left:1166px">P12:- - -</div><svg width="700" height="14" viewBox="0 0 700 14" style="position:absolute;left:0;top:607px"><path fill="none" stroke="#00f000" stroke-width="2.4" stroke-linecap="round" stroke-linejoin="round" d="M185.2 7.5l2.6 2.8l5.6-6.3"/><path fill="none" stroke="#00f000" stroke-width="2.4" stroke-linecap="round" stroke-linejoin="round" d="M282.2 7.5l2.6 2.8l5.6-6.3"/><path fill="none" stroke="#f0f000" stroke-width="1.2" d="M378.5 2l9.5 9.5M388 2l-9.5 9.5"/><path fill="none" stroke="#fff" stroke-width="1" d="M381.8 3.5h3v3h-3zM378.5 9.5h3M385 9.5h3"/><path fill="none" stroke="#f0f000" stroke-width="1.2" d="M475.5 2l9.5 9.5M485 2l-9.5 9.5"/><path fill="none" stroke="#fff" stroke-width="1" d="M478.8 3.5h3v3h-3zM475.5 9.5h3M482 9.5h3"/><path fill="none" stroke="#fff" stroke-width="1" d="M575.5 2.5v8M578.5 2.5v8M573 7.5l4 4l4-4"/><path fill="#10108a" d="M674 2.5l5 9.5h-10z"/><path fill="#ffe000" d="M673.7 1.8l4.6 9h-9.2z"/><path stroke="#222" stroke-width="1.2" d="M673.7 4.5v3.6M673.7 9v1.2"/></svg><div class="cb" style="left:3px;"><div class="hd" style="background:#ffff00"></div><div class="nm">C1</div><div class="bd" style="left:56px;width:11.5px;color:#ffff00"><span style="display:inline-block;transform:scaleX(.88)">E</span></div><div class="bd" style="left:69px;width:11.5px;color:#ffff00"><span style="display:inline-block;transform:scaleX(.88)">B</span></div><div class="bd" style="left:82px;width:12px;color:#ffff00"><span style="display:inline-block;transform:scaleX(.88)">D</span></div><div class="r" style="top:18px">2.00 A/div</div><div class="r" style="top:33px">0.0 mA ofst</div><div class="r" style="top:52px">344.5 mA</div><div class="r" style="top:67px">1.4570 A</div><svg width="12" height="30" style="position:absolute;left:0;top:54px"><path fill="none" stroke="#fff" stroke-width="1" d="M6.5 0v12M4 9l2.5 3l2.5-3M6.5 29v-13M4 19l2.5-3l2.5 3"/></svg></div><div class="cb" style="left:103px;"><div class="hd" style="background:#ff69b4"></div><div class="nm">C2</div><div class="bd" style="left:30px;width:27px;color:#ff69b4"><span style="display:inline-block;transform:scaleX(.88)">ESR</span></div><div class="bd" style="left:58px;width:37px;color:#ff69b4"><span style="display:inline-block;transform:scaleX(.88)">DC1M</span></div><div class="r" style="top:18px">10.0 V/div</div><div class="r" style="top:33px">13.340 V</div><div class="r" style="top:52px">39 mV</div><div class="r" style="top:67px">23.969 V</div><svg width="12" height="30" style="position:absolute;left:0;top:54px"><path fill="none" stroke="#fff" stroke-width="1" d="M6.5 0v12M4 9l2.5 3l2.5-3M6.5 29v-13M4 19l2.5-3l2.5 3"/></svg></div><div class="cb" style="left:203px;"><div class="hd" style="background:#00ffff"></div><div class="nm">C3</div><div class="bd" style="left:30px;width:27px;color:#00ffff"><span style="display:inline-block;transform:scaleX(.88)">ESR</span></div><div class="bd" style="left:58px;width:37px;color:#00ffff"><span style="display:inline-block;transform:scaleX(.88)">DC1M</span></div><div class="r" style="top:18px">1.00 V/div</div><div class="r" style="top:33px">-3.8500 V</div><div class="r" style="top:52px">5.1 mV</div><div class="r" style="top:67px">708.3 mV</div><svg width="12" height="30" style="position:absolute;left:0;top:54px"><path fill="none" stroke="#fff" stroke-width="1" d="M6.5 0v12M4 9l2.5 3l2.5-3M6.5 29v-13M4 19l2.5-3l2.5 3"/></svg></div><div class="cb" style="left:303px;background:#2b4d69;"><div class="hd" style="background:#8484ff"></div><div class="nm">C6</div><div class="bd" style="left:30px;width:27px;color:#8484ff"><span style="display:inline-block;transform:scaleX(.88)">ESR</span></div><div class="bd" style="left:58px;width:37px;color:#8484ff"><span style="display:inline-block;transform:scaleX(.88)">DC1M</span></div><div class="r" style="top:18px">5.00 V/div</div><div class="r" style="top:33px">-10.100 V</div><div class="r" style="top:52px">59 mV</div><div class="r" style="top:67px">5.012 V</div><svg width="12" height="30" style="position:absolute;left:0;top:54px"><path fill="none" stroke="#fff" stroke-width="1" d="M6.5 0v12M4 9l2.5 3l2.5-3M6.5 29v-13M4 19l2.5-3l2.5 3"/></svg><div style="position:absolute;left:-1px;top:-2px;width:95px;height:90px;border:2px solid #3a96f8"></div></div><svg width="100" height="84" style="position:absolute;left:402px;top:622px" shape-rendering="crispEdges"><rect x="1.5" y="1.5" width="96" height="82" fill="none" stroke="#fff" stroke-width="1" stroke-dasharray="3 2"/></svg><svg width="14" height="14" style="position:absolute;left:443px;top:657px"><path stroke="#fff" stroke-width="2" d="M7 0v14M0 7h14"/></svg><div style="position:absolute;left:1002px;top:623px;width:57px;height:49px;background:#444"></div><div style="position:absolute;left:1003px;top:623px;width:55px;height:15px;background:#00ff00;color:#000;font-weight:bold;font-size:13px;line-height:16px;text-align:center">HD</div><div class="t13" style="left:1003px;top:647px;width:57px;text-align:center">12 Bits</div><div style="position:absolute;left:1062px;top:623px;width:112px;height:49px;background:#444"></div><div style="position:absolute;left:1063px;top:623px;width:110px;height:15px;background:#fff"></div><div class="t13" style="left:1065px;top:624px;color:#000">Tbase</div><div class="t13" style="right:107px;top:624px;color:#000">0.00 ms</div><div class="t13" style="right:107px;top:640px">500 µs/div</div><div class="t13" style="left:1065px;top:656px">50 MS</div><div class="t13" style="right:107px;top:656px">10 GS/s</div><div style="position:absolute;left:1177px;top:623px;width:97px;height:49px;background:#444"></div><div style="position:absolute;left:1178px;top:623px;width:95px;height:15px;background:#fff"></div><div class="t13" style="left:1180px;top:624px;color:#000">Trigger</div><div style="position:absolute;left:1228px;top:624px;width:19px;height:13px;background:#000;border-radius:3px;color:#fff;font-size:10px;line-height:12px;text-align:center">C6</div><div style="position:absolute;left:1250px;top:624px;width:21px;height:13px;background:#000;border-radius:3px;color:#fff;font-size:10px;line-height:12px;text-align:center">DC</div><div class="t13" style="left:1180px;top:640px">Normal</div><div class="t13" style="right:7px;top:640px">2.00 V</div><div class="t13" style="left:1180px;top:656px">Edge</div><div class="t13" style="right:7px;top:656px">Positive</div><div class="t13" style="left:1008px;top:673px">X1=</div><div class="t13" style="right:152px;top:673px">-2.5000000 ms</div><div class="t13" style="right:108px;top:673px">ΔX=</div><div class="t13" style="right:10px;top:673px">4.9999999 ms</div><div class="t13" style="left:1008px;top:689px">X2=</div><div class="t13" style="right:152px;top:689px">2.4999999 ms</div><div class="t13" style="right:108px;top:689px">1/ΔX=</div><div class="t13" style="right:9px;top:689px">200.000004 Hz</div></body></html>
